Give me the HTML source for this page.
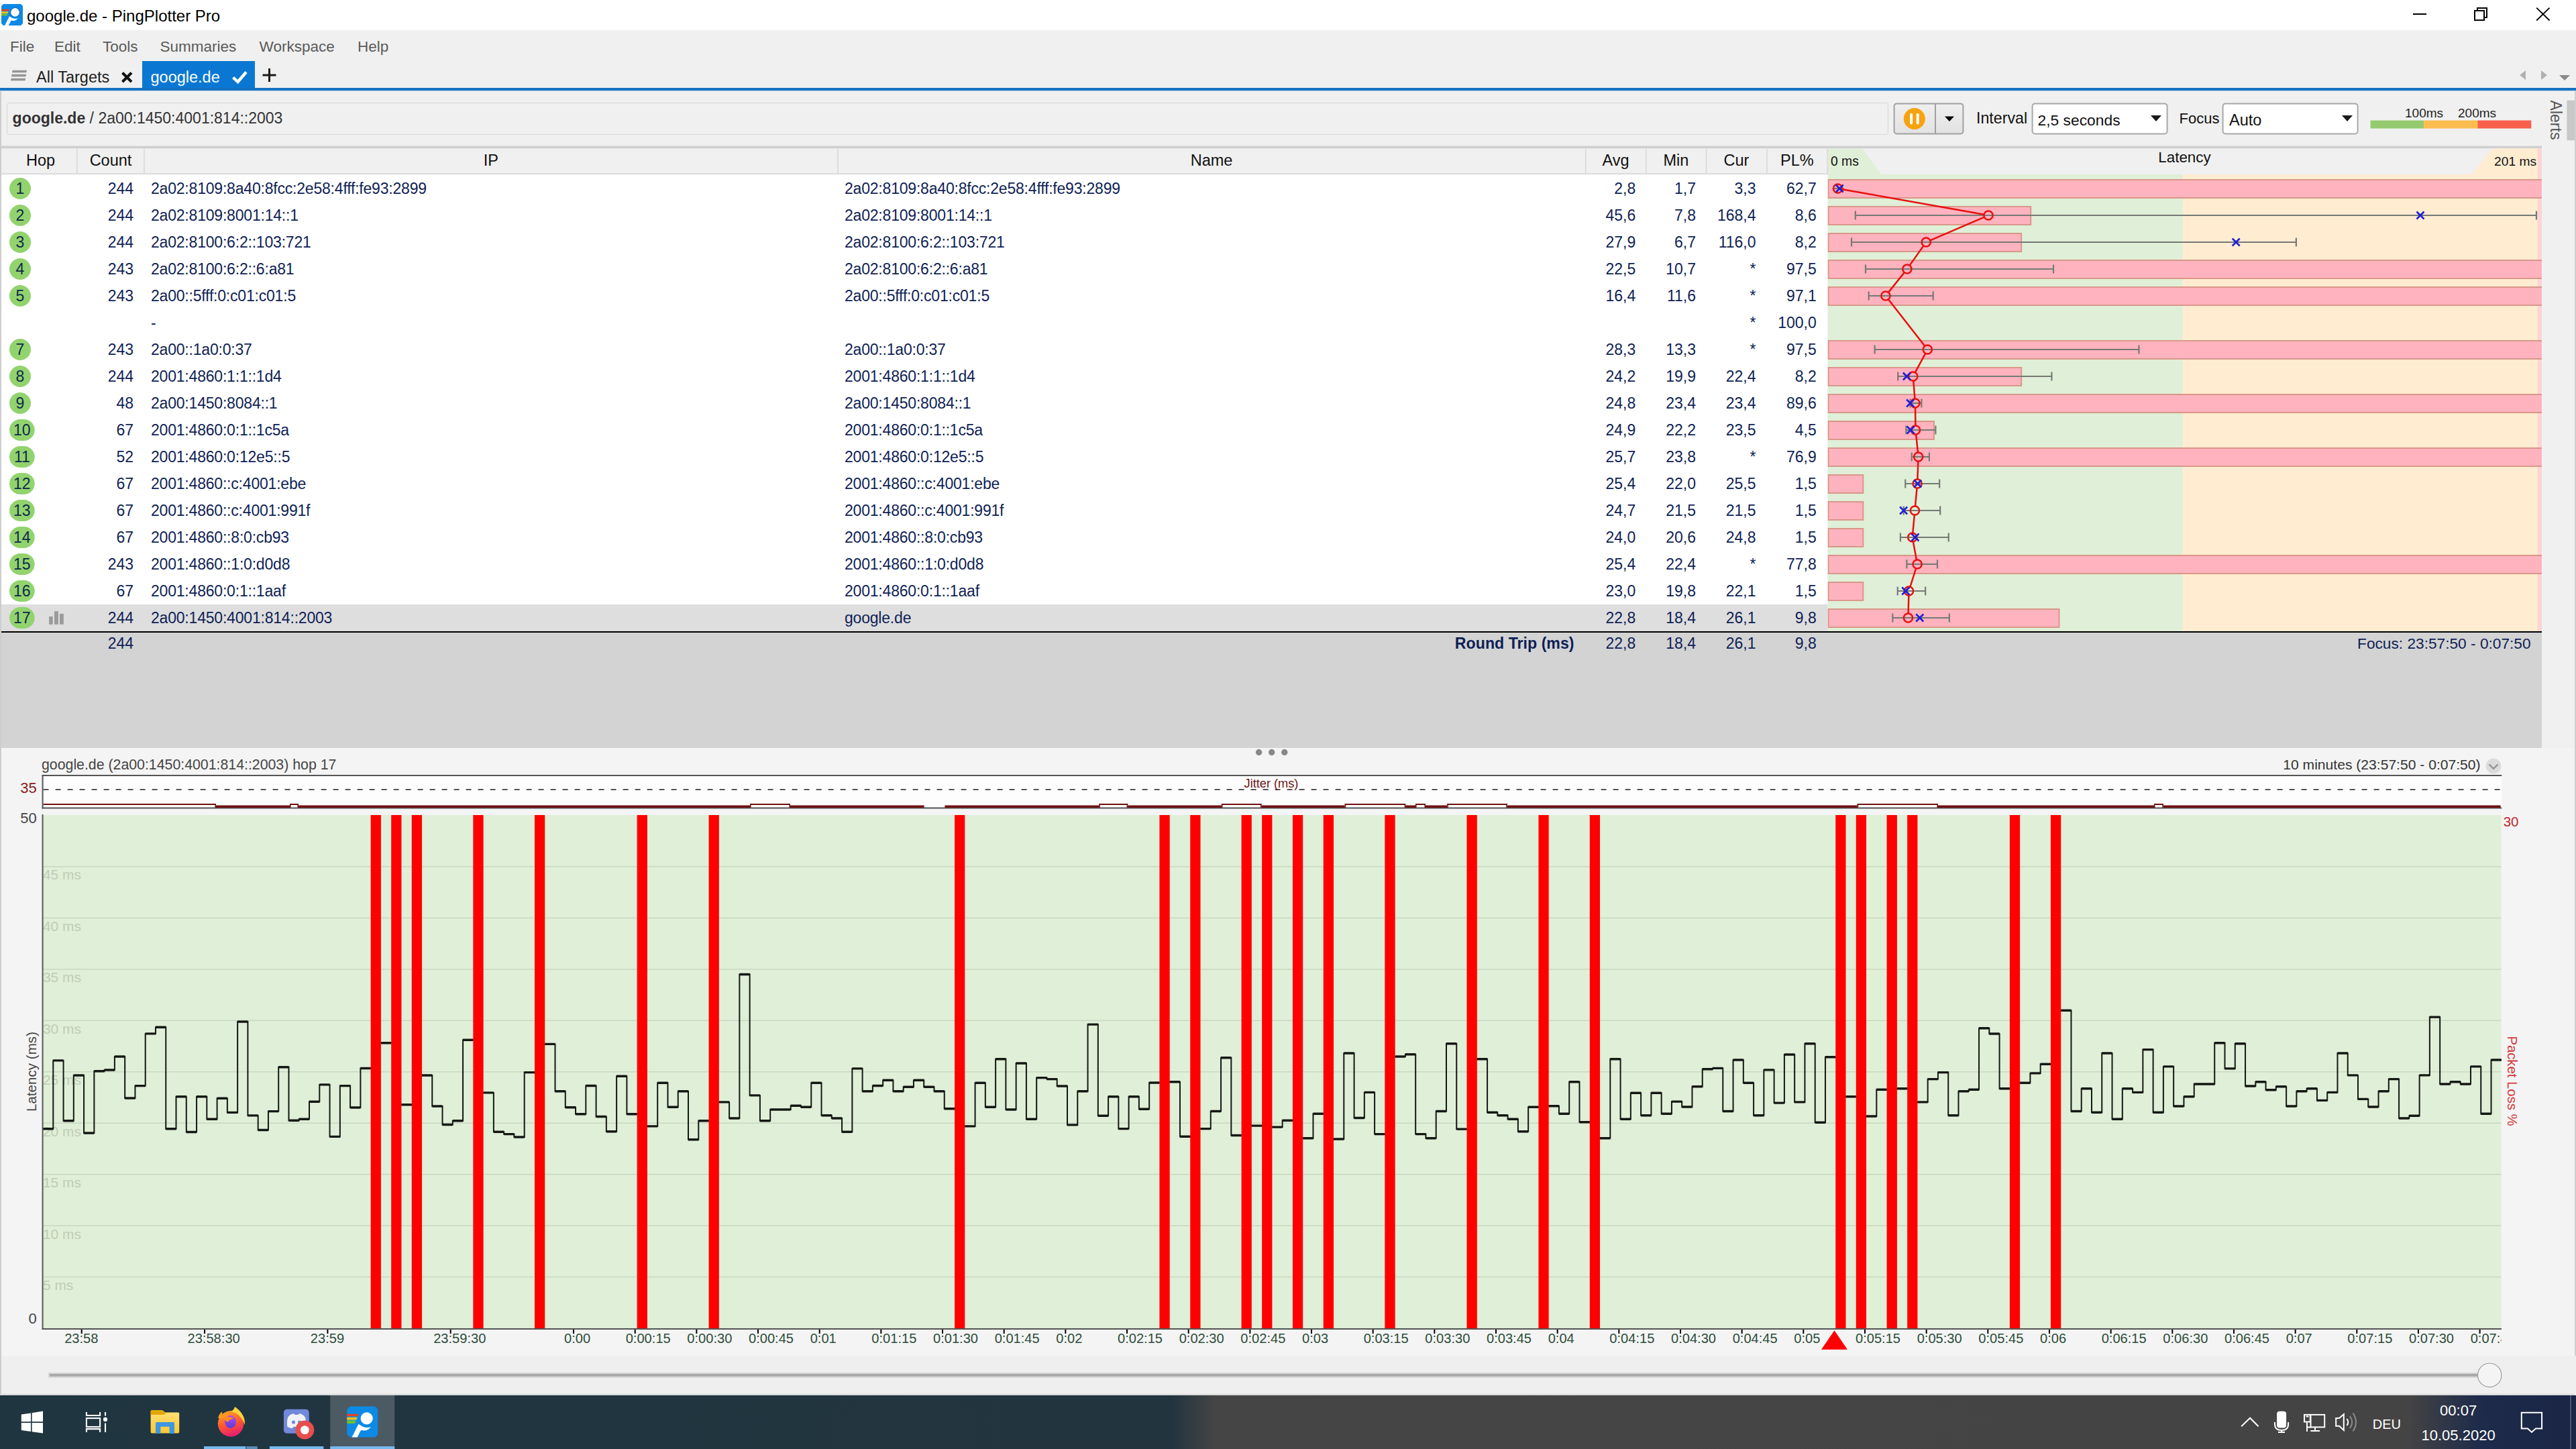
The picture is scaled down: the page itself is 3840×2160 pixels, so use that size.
<!DOCTYPE html><html><head><meta charset="utf-8"><title>google.de - PingPlotter Pro</title><style>html,body{margin:0;padding:0;width:3840px;height:2160px;overflow:hidden;background:#f0f0f0;}svg{display:block;font-family:"Liberation Sans",sans-serif;}</style></head><body><svg width="3840" height="2160" viewBox="0 0 3840 2160"><rect x="0.00" y="0.00" width="3840.00" height="45.00" fill="#ffffff" /><rect x="0.00" y="45.00" width="3840.00" height="86.00" fill="#f0f0f0" /><rect x="0.00" y="131.00" width="3840.00" height="4.50" fill="#1672c0" /><rect x="0.00" y="135.50" width="3840.00" height="1.20" fill="#cfe6f5" /><rect x="0.00" y="135.50" width="3840.00" height="1944.50" fill="#f0f0f0" /><rect x="0.00" y="136.00" width="2.00" height="1944.00" fill="#cdcdcd" /><g transform="translate(2,6)"><polygon points="3,0 29,0 32,3 32,29 29,32 3,32 0,29 0,3" fill="#0d8ae6"/><polygon points="0,7.7 11.9,7.7 11.3,10.2 0,10.2" fill="#e8411f"/><polygon points="0,11.2 10.6,11.2 9.9,13.9 0,13.9" fill="#f2c21c"/><polygon points="0,14.5 9.3,14.5 8.4,17.6 0,17.6" fill="#6cc12a"/><path d="M5.1 32 L10.7 32 L14.5 24.6 Q21.5 26 24.7 21.3 Q19 22.6 15.5 20.5 L12 18.2 Z" fill="#ffffff"/><circle cx="20.5" cy="12.4" r="7.7" fill="#1070c4"/><circle cx="20.5" cy="12.4" r="6.3" fill="#ffffff"/></g><text x="40.00" y="31.50" font-family="Liberation Sans" font-size="24" font-weight="400" fill="#000000" text-anchor="start" >google.de - PingPlotter Pro</text><rect x="3597.00" y="20.00" width="20.10" height="2.00" fill="#000000" /><rect x="3689" y="15.9" width="14" height="14.2" fill="none" stroke="#000" stroke-width="2"/><path d="M3693 14.9 V11.9 H3707 V26 H3704" fill="none" stroke="#000" stroke-width="2"/><path d="M3781.2 11.6 L3800.6 30.5 M3800.6 11.6 L3781.2 30.5" stroke="#000" stroke-width="1.8"/><text x="15.00" y="76.50" font-family="Liberation Sans" font-size="22.5" font-weight="400" fill="#5a5a5a" text-anchor="start" >File</text><text x="81.00" y="76.50" font-family="Liberation Sans" font-size="22.5" font-weight="400" fill="#5a5a5a" text-anchor="start" >Edit</text><text x="153.00" y="76.50" font-family="Liberation Sans" font-size="22.5" font-weight="400" fill="#5a5a5a" text-anchor="start" >Tools</text><text x="238.50" y="76.50" font-family="Liberation Sans" font-size="22.5" font-weight="400" fill="#5a5a5a" text-anchor="start" >Summaries</text><text x="386.60" y="76.50" font-family="Liberation Sans" font-size="22.5" font-weight="400" fill="#5a5a5a" text-anchor="start" >Workspace</text><text x="533.00" y="76.50" font-family="Liberation Sans" font-size="22.5" font-weight="400" fill="#5a5a5a" text-anchor="start" >Help</text><g fill="#959595"><polygon points="18.5,104.7 40,104.7 39.3,108.3 17.8,108.3"/><polygon points="17.6,110.7 39.1,110.7 38.4,114.3 16.9,114.3"/><polygon points="16.7,116.7 38.2,116.7 37.5,120.3 16,120.3"/></g><text x="54.00" y="123.00" font-family="Liberation Sans" font-size="23.5" font-weight="400" fill="#1e1e1e" text-anchor="start" >All Targets</text><path d="M182.5 108.5 L196 122 M196 108.5 L182.5 122" stroke="#111111" stroke-width="4"/><rect x="212.00" y="91.00" width="168.00" height="40.00" fill="#0a78d2" /><text x="224.50" y="123.00" font-family="Liberation Sans" font-size="23.5" font-weight="400" fill="#ffffff" text-anchor="start" >google.de</text><path d="M347.5 115.5 L354.5 122 L367 107.5" fill="none" stroke="#ffffff" stroke-width="4.4"/><path d="M401.5 102 V122 M391.5 112 H411.5" stroke="#1a1a1a" stroke-width="3"/><path d="M3765 105 L3756 112 L3765 119 Z" fill="#b0b0b0"/><path d="M3788 105 L3797 112 L3788 119 Z" fill="#b0b0b0"/><path d="M3815 112 L3831 112 L3823 120 Z" fill="#8a8a8a"/><rect x="10.5" y="153.5" width="2804" height="47" rx="3" fill="#f0f0f0" stroke="#d6d6d6" stroke-width="1"/><text x="18.6" y="183.5" font-family="Liberation Sans" font-size="23" fill="#333333"><tspan font-weight="700">google.de</tspan><tspan> / 2a00:1450:4001:814::2003</tspan></text><defs><linearGradient id="btng" x1="0" x2="0" y1="0" y2="1"><stop offset="0" stop-color="#efefef"/><stop offset="1" stop-color="#e2e2e2"/></linearGradient></defs><rect x="2823.6" y="154.4" width="102.8" height="45" rx="4" fill="url(#btng)" stroke="#a0a0a0" stroke-width="2"/><line x1="2885.00" y1="155.00" x2="2885.00" y2="199.50" stroke="#a0a0a0" stroke-width="2" /><circle cx="2853.8" cy="177" r="16" fill="#f7a20e"/><rect x="2847.1" y="168.8" width="4" height="16.7" rx="2" fill="#ffffff"/><rect x="2856.7" y="168.8" width="4" height="16.7" rx="2" fill="#ffffff"/><path d="M2899 173.4 L2913 173.4 L2906 181 Z" fill="#000000"/><text x="2946.00" y="184.00" font-family="Liberation Sans" font-size="23.2" font-weight="400" fill="#111111" text-anchor="start" >Interval</text><rect x="3029.6" y="154.4" width="201" height="45" rx="4" fill="#ffffff" stroke="#a8a8a8" stroke-width="2"/><text x="3037.60" y="187.00" font-family="Liberation Sans" font-size="22.8" font-weight="400" fill="#111111" text-anchor="start" >2,5 seconds</text><path d="M3206 172 L3222 172 L3214 181 Z" fill="#1a1a1a"/><text x="3248.50" y="184.00" font-family="Liberation Sans" font-size="22" font-weight="400" fill="#111111" text-anchor="start" >Focus</text><rect x="3313.6" y="154.4" width="201" height="45" rx="4" fill="#ffffff" stroke="#a8a8a8" stroke-width="2"/><text x="3323.00" y="187.00" font-family="Liberation Sans" font-size="23.5" font-weight="400" fill="#111111" text-anchor="start" >Auto</text><path d="M3491 172 L3507 172 L3499 181 Z" fill="#1a1a1a"/><rect x="3533.60" y="179.50" width="79.70" height="12.00" fill="#95cb6e" /><rect x="3613.30" y="179.50" width="80.00" height="12.00" fill="#fbbd4f" /><rect x="3693.30" y="179.50" width="80.00" height="12.00" fill="#f8604b" /><text x="3585.00" y="175.00" font-family="Liberation Sans" font-size="19" font-weight="400" fill="#1e1e1e" text-anchor="start" >100ms</text><text x="3664.00" y="175.00" font-family="Liberation Sans" font-size="19" font-weight="400" fill="#1e1e1e" text-anchor="start" >200ms</text><text x="3818.40" y="149.60" font-family="Liberation Sans" font-size="23" font-weight="400" fill="#555555" text-anchor="start" transform="rotate(90 3818.4 149.6)" dominant-baseline="hanging">Alerts</text><rect x="3826.40" y="149.60" width="11.60" height="59.60" fill="#c8c8c8" /><rect x="3838.00" y="136.00" width="2.00" height="1944.00" fill="#d0d0d0" /><rect x="3789.00" y="1115.00" width="49.00" height="963.00" fill="#f3f3f3" /><rect x="2.00" y="217.50" width="3787.00" height="4.00" fill="#d0d0d0" /><rect x="2.00" y="221.50" width="3787.00" height="38.00" fill="#f0f0f0" /><rect x="2.00" y="258.50" width="2722.00" height="1.50" fill="#d4d4d4" /><rect x="114.10" y="221.50" width="1.50" height="37.00" fill="#d8d8d8" /><rect x="214.20" y="221.50" width="1.50" height="37.00" fill="#d8d8d8" /><rect x="1248.30" y="221.50" width="1.50" height="37.00" fill="#d8d8d8" /><rect x="2362.90" y="221.50" width="1.50" height="37.00" fill="#d8d8d8" /><rect x="2453.10" y="221.50" width="1.50" height="37.00" fill="#d8d8d8" /><rect x="2542.70" y="221.50" width="1.50" height="37.00" fill="#d8d8d8" /><rect x="2633.20" y="221.50" width="1.50" height="37.00" fill="#d8d8d8" /><rect x="2723.50" y="221.50" width="1.50" height="38.50" fill="#d8d8d8" /><text x="60.50" y="247.00" font-family="Liberation Sans" font-size="23.5" font-weight="400" fill="#111111" text-anchor="middle" >Hop</text><text x="165.00" y="247.00" font-family="Liberation Sans" font-size="23.5" font-weight="400" fill="#111111" text-anchor="middle" >Count</text><text x="731.80" y="247.00" font-family="Liberation Sans" font-size="23.5" font-weight="400" fill="#111111" text-anchor="middle" >IP</text><text x="1806.00" y="247.00" font-family="Liberation Sans" font-size="23.5" font-weight="400" fill="#111111" text-anchor="middle" >Name</text><text x="2408.50" y="247.00" font-family="Liberation Sans" font-size="23.5" font-weight="400" fill="#111111" text-anchor="middle" >Avg</text><text x="2498.40" y="247.00" font-family="Liberation Sans" font-size="23.5" font-weight="400" fill="#111111" text-anchor="middle" >Min</text><text x="2588.50" y="247.00" font-family="Liberation Sans" font-size="23.5" font-weight="400" fill="#111111" text-anchor="middle" >Cur</text><text x="2678.80" y="247.00" font-family="Liberation Sans" font-size="23.5" font-weight="400" fill="#111111" text-anchor="middle" >PL%</text><polygon points="2725,221.5 2775.7,221.5 2804.8,260 2725,260" fill="#e0efd7"/><polygon points="3715.5,221.5 3782.6,221.5 3782.6,260 3684.5,260" fill="#ffecd1"/><rect x="3782.60" y="221.50" width="6.40" height="38.50" fill="#fcd5d5" /><text x="2729.00" y="247.00" font-family="Liberation Sans" font-size="19.3" font-weight="400" fill="#111111" text-anchor="start" >0 ms</text><text x="3256.50" y="242.30" font-family="Liberation Sans" font-size="22.4" font-weight="400" fill="#111111" text-anchor="middle" >Latency</text><text x="3781.00" y="246.80" font-family="Liberation Sans" font-size="19.2" font-weight="400" fill="#111111" text-anchor="end" >201 ms</text><rect x="2.00" y="260.00" width="2722.50" height="680.00" fill="#ffffff" /><rect x="2.00" y="901.00" width="2722.50" height="40.00" fill="#dedede" /><rect x="2724.50" y="260.00" width="529.10" height="681.00" fill="#e0efd7" /><rect x="3253.60" y="260.00" width="529.00" height="681.00" fill="#ffecd1" /><rect x="3782.60" y="260.00" width="6.40" height="681.00" fill="#fcd5d5" /><rect x="14.00" y="265.00" width="32.00" height="32" rx="16" fill="#92d36e"/><text x="30.00" y="289.30" font-family="Liberation Sans" font-size="23" font-weight="400" fill="#0d2a4a" text-anchor="middle" >1</text><text x="199.00" y="289.00" font-family="Liberation Sans" font-size="23" font-weight="400" fill="#0f1f55" text-anchor="end" >244</text><text x="225.00" y="289.00" font-family="Liberation Sans" font-size="23" font-weight="400" fill="#0f1f55" text-anchor="start" letter-spacing="-0.2" >2a02:8109:8a40:8fcc:2e58:4fff:fe93:2899</text><text x="1259.00" y="289.00" font-family="Liberation Sans" font-size="23" font-weight="400" fill="#0f1f55" text-anchor="start" letter-spacing="-0.2" >2a02:8109:8a40:8fcc:2e58:4fff:fe93:2899</text><text x="2438.20" y="289.00" font-family="Liberation Sans" font-size="23" font-weight="400" fill="#0f1f55" text-anchor="end" >2,8</text><text x="2528.00" y="289.00" font-family="Liberation Sans" font-size="23" font-weight="400" fill="#0f1f55" text-anchor="end" >1,7</text><text x="2617.50" y="289.00" font-family="Liberation Sans" font-size="23" font-weight="400" fill="#0f1f55" text-anchor="end" >3,3</text><text x="2707.70" y="289.00" font-family="Liberation Sans" font-size="23" font-weight="400" fill="#0f1f55" text-anchor="end" >62,7</text><rect x="14.00" y="305.00" width="32.00" height="32" rx="16" fill="#92d36e"/><text x="30.00" y="329.30" font-family="Liberation Sans" font-size="23" font-weight="400" fill="#0d2a4a" text-anchor="middle" >2</text><text x="199.00" y="329.00" font-family="Liberation Sans" font-size="23" font-weight="400" fill="#0f1f55" text-anchor="end" >244</text><text x="225.00" y="329.00" font-family="Liberation Sans" font-size="23" font-weight="400" fill="#0f1f55" text-anchor="start" letter-spacing="-0.2" >2a02:8109:8001:14::1</text><text x="1259.00" y="329.00" font-family="Liberation Sans" font-size="23" font-weight="400" fill="#0f1f55" text-anchor="start" letter-spacing="-0.2" >2a02:8109:8001:14::1</text><text x="2438.20" y="329.00" font-family="Liberation Sans" font-size="23" font-weight="400" fill="#0f1f55" text-anchor="end" >45,6</text><text x="2528.00" y="329.00" font-family="Liberation Sans" font-size="23" font-weight="400" fill="#0f1f55" text-anchor="end" >7,8</text><text x="2617.50" y="329.00" font-family="Liberation Sans" font-size="23" font-weight="400" fill="#0f1f55" text-anchor="end" >168,4</text><text x="2707.70" y="329.00" font-family="Liberation Sans" font-size="23" font-weight="400" fill="#0f1f55" text-anchor="end" >8,6</text><rect x="14.00" y="345.00" width="32.00" height="32" rx="16" fill="#92d36e"/><text x="30.00" y="369.30" font-family="Liberation Sans" font-size="23" font-weight="400" fill="#0d2a4a" text-anchor="middle" >3</text><text x="199.00" y="369.00" font-family="Liberation Sans" font-size="23" font-weight="400" fill="#0f1f55" text-anchor="end" >244</text><text x="225.00" y="369.00" font-family="Liberation Sans" font-size="23" font-weight="400" fill="#0f1f55" text-anchor="start" letter-spacing="-0.2" >2a02:8100:6:2::103:721</text><text x="1259.00" y="369.00" font-family="Liberation Sans" font-size="23" font-weight="400" fill="#0f1f55" text-anchor="start" letter-spacing="-0.2" >2a02:8100:6:2::103:721</text><text x="2438.20" y="369.00" font-family="Liberation Sans" font-size="23" font-weight="400" fill="#0f1f55" text-anchor="end" >27,9</text><text x="2528.00" y="369.00" font-family="Liberation Sans" font-size="23" font-weight="400" fill="#0f1f55" text-anchor="end" >6,7</text><text x="2617.50" y="369.00" font-family="Liberation Sans" font-size="23" font-weight="400" fill="#0f1f55" text-anchor="end" >116,0</text><text x="2707.70" y="369.00" font-family="Liberation Sans" font-size="23" font-weight="400" fill="#0f1f55" text-anchor="end" >8,2</text><rect x="14.00" y="385.00" width="32.00" height="32" rx="16" fill="#92d36e"/><text x="30.00" y="409.30" font-family="Liberation Sans" font-size="23" font-weight="400" fill="#0d2a4a" text-anchor="middle" >4</text><text x="199.00" y="409.00" font-family="Liberation Sans" font-size="23" font-weight="400" fill="#0f1f55" text-anchor="end" >243</text><text x="225.00" y="409.00" font-family="Liberation Sans" font-size="23" font-weight="400" fill="#0f1f55" text-anchor="start" letter-spacing="-0.2" >2a02:8100:6:2::6:a81</text><text x="1259.00" y="409.00" font-family="Liberation Sans" font-size="23" font-weight="400" fill="#0f1f55" text-anchor="start" letter-spacing="-0.2" >2a02:8100:6:2::6:a81</text><text x="2438.20" y="409.00" font-family="Liberation Sans" font-size="23" font-weight="400" fill="#0f1f55" text-anchor="end" >22,5</text><text x="2528.00" y="409.00" font-family="Liberation Sans" font-size="23" font-weight="400" fill="#0f1f55" text-anchor="end" >10,7</text><text x="2617.50" y="409.00" font-family="Liberation Sans" font-size="23" font-weight="400" fill="#0f1f55" text-anchor="end" >*</text><text x="2707.70" y="409.00" font-family="Liberation Sans" font-size="23" font-weight="400" fill="#0f1f55" text-anchor="end" >97,5</text><rect x="14.00" y="425.00" width="32.00" height="32" rx="16" fill="#92d36e"/><text x="30.00" y="449.30" font-family="Liberation Sans" font-size="23" font-weight="400" fill="#0d2a4a" text-anchor="middle" >5</text><text x="199.00" y="449.00" font-family="Liberation Sans" font-size="23" font-weight="400" fill="#0f1f55" text-anchor="end" >243</text><text x="225.00" y="449.00" font-family="Liberation Sans" font-size="23" font-weight="400" fill="#0f1f55" text-anchor="start" letter-spacing="-0.2" >2a00::5fff:0:c01:c01:5</text><text x="1259.00" y="449.00" font-family="Liberation Sans" font-size="23" font-weight="400" fill="#0f1f55" text-anchor="start" letter-spacing="-0.2" >2a00::5fff:0:c01:c01:5</text><text x="2438.20" y="449.00" font-family="Liberation Sans" font-size="23" font-weight="400" fill="#0f1f55" text-anchor="end" >16,4</text><text x="2528.00" y="449.00" font-family="Liberation Sans" font-size="23" font-weight="400" fill="#0f1f55" text-anchor="end" >11,6</text><text x="2617.50" y="449.00" font-family="Liberation Sans" font-size="23" font-weight="400" fill="#0f1f55" text-anchor="end" >*</text><text x="2707.70" y="449.00" font-family="Liberation Sans" font-size="23" font-weight="400" fill="#0f1f55" text-anchor="end" >97,1</text><text x="225.00" y="489.00" font-family="Liberation Sans" font-size="23" font-weight="400" fill="#0f1f55" text-anchor="start" >-</text><text x="2617.50" y="489.00" font-family="Liberation Sans" font-size="23" font-weight="400" fill="#0f1f55" text-anchor="end" >*</text><text x="2707.70" y="489.00" font-family="Liberation Sans" font-size="23" font-weight="400" fill="#0f1f55" text-anchor="end" >100,0</text><rect x="14.00" y="505.00" width="32.00" height="32" rx="16" fill="#92d36e"/><text x="30.00" y="529.30" font-family="Liberation Sans" font-size="23" font-weight="400" fill="#0d2a4a" text-anchor="middle" >7</text><text x="199.00" y="529.00" font-family="Liberation Sans" font-size="23" font-weight="400" fill="#0f1f55" text-anchor="end" >243</text><text x="225.00" y="529.00" font-family="Liberation Sans" font-size="23" font-weight="400" fill="#0f1f55" text-anchor="start" letter-spacing="-0.2" >2a00::1a0:0:37</text><text x="1259.00" y="529.00" font-family="Liberation Sans" font-size="23" font-weight="400" fill="#0f1f55" text-anchor="start" letter-spacing="-0.2" >2a00::1a0:0:37</text><text x="2438.20" y="529.00" font-family="Liberation Sans" font-size="23" font-weight="400" fill="#0f1f55" text-anchor="end" >28,3</text><text x="2528.00" y="529.00" font-family="Liberation Sans" font-size="23" font-weight="400" fill="#0f1f55" text-anchor="end" >13,3</text><text x="2617.50" y="529.00" font-family="Liberation Sans" font-size="23" font-weight="400" fill="#0f1f55" text-anchor="end" >*</text><text x="2707.70" y="529.00" font-family="Liberation Sans" font-size="23" font-weight="400" fill="#0f1f55" text-anchor="end" >97,5</text><rect x="14.00" y="545.00" width="32.00" height="32" rx="16" fill="#92d36e"/><text x="30.00" y="569.30" font-family="Liberation Sans" font-size="23" font-weight="400" fill="#0d2a4a" text-anchor="middle" >8</text><text x="199.00" y="569.00" font-family="Liberation Sans" font-size="23" font-weight="400" fill="#0f1f55" text-anchor="end" >244</text><text x="225.00" y="569.00" font-family="Liberation Sans" font-size="23" font-weight="400" fill="#0f1f55" text-anchor="start" letter-spacing="-0.2" >2001:4860:1:1::1d4</text><text x="1259.00" y="569.00" font-family="Liberation Sans" font-size="23" font-weight="400" fill="#0f1f55" text-anchor="start" letter-spacing="-0.2" >2001:4860:1:1::1d4</text><text x="2438.20" y="569.00" font-family="Liberation Sans" font-size="23" font-weight="400" fill="#0f1f55" text-anchor="end" >24,2</text><text x="2528.00" y="569.00" font-family="Liberation Sans" font-size="23" font-weight="400" fill="#0f1f55" text-anchor="end" >19,9</text><text x="2617.50" y="569.00" font-family="Liberation Sans" font-size="23" font-weight="400" fill="#0f1f55" text-anchor="end" >22,4</text><text x="2707.70" y="569.00" font-family="Liberation Sans" font-size="23" font-weight="400" fill="#0f1f55" text-anchor="end" >8,2</text><rect x="14.00" y="585.00" width="32.00" height="32" rx="16" fill="#92d36e"/><text x="30.00" y="609.30" font-family="Liberation Sans" font-size="23" font-weight="400" fill="#0d2a4a" text-anchor="middle" >9</text><text x="199.00" y="609.00" font-family="Liberation Sans" font-size="23" font-weight="400" fill="#0f1f55" text-anchor="end" >48</text><text x="225.00" y="609.00" font-family="Liberation Sans" font-size="23" font-weight="400" fill="#0f1f55" text-anchor="start" letter-spacing="-0.2" >2a00:1450:8084::1</text><text x="1259.00" y="609.00" font-family="Liberation Sans" font-size="23" font-weight="400" fill="#0f1f55" text-anchor="start" letter-spacing="-0.2" >2a00:1450:8084::1</text><text x="2438.20" y="609.00" font-family="Liberation Sans" font-size="23" font-weight="400" fill="#0f1f55" text-anchor="end" >24,8</text><text x="2528.00" y="609.00" font-family="Liberation Sans" font-size="23" font-weight="400" fill="#0f1f55" text-anchor="end" >23,4</text><text x="2617.50" y="609.00" font-family="Liberation Sans" font-size="23" font-weight="400" fill="#0f1f55" text-anchor="end" >23,4</text><text x="2707.70" y="609.00" font-family="Liberation Sans" font-size="23" font-weight="400" fill="#0f1f55" text-anchor="end" >89,6</text><rect x="14.00" y="625.00" width="37.70" height="32" rx="16" fill="#92d36e"/><text x="32.85" y="649.30" font-family="Liberation Sans" font-size="23" font-weight="400" fill="#0d2a4a" text-anchor="middle" >10</text><text x="199.00" y="649.00" font-family="Liberation Sans" font-size="23" font-weight="400" fill="#0f1f55" text-anchor="end" >67</text><text x="225.00" y="649.00" font-family="Liberation Sans" font-size="23" font-weight="400" fill="#0f1f55" text-anchor="start" letter-spacing="-0.2" >2001:4860:0:1::1c5a</text><text x="1259.00" y="649.00" font-family="Liberation Sans" font-size="23" font-weight="400" fill="#0f1f55" text-anchor="start" letter-spacing="-0.2" >2001:4860:0:1::1c5a</text><text x="2438.20" y="649.00" font-family="Liberation Sans" font-size="23" font-weight="400" fill="#0f1f55" text-anchor="end" >24,9</text><text x="2528.00" y="649.00" font-family="Liberation Sans" font-size="23" font-weight="400" fill="#0f1f55" text-anchor="end" >22,2</text><text x="2617.50" y="649.00" font-family="Liberation Sans" font-size="23" font-weight="400" fill="#0f1f55" text-anchor="end" >23,5</text><text x="2707.70" y="649.00" font-family="Liberation Sans" font-size="23" font-weight="400" fill="#0f1f55" text-anchor="end" >4,5</text><rect x="14.00" y="665.00" width="37.70" height="32" rx="16" fill="#92d36e"/><text x="32.85" y="689.30" font-family="Liberation Sans" font-size="23" font-weight="400" fill="#0d2a4a" text-anchor="middle" >11</text><text x="199.00" y="689.00" font-family="Liberation Sans" font-size="23" font-weight="400" fill="#0f1f55" text-anchor="end" >52</text><text x="225.00" y="689.00" font-family="Liberation Sans" font-size="23" font-weight="400" fill="#0f1f55" text-anchor="start" letter-spacing="-0.2" >2001:4860:0:12e5::5</text><text x="1259.00" y="689.00" font-family="Liberation Sans" font-size="23" font-weight="400" fill="#0f1f55" text-anchor="start" letter-spacing="-0.2" >2001:4860:0:12e5::5</text><text x="2438.20" y="689.00" font-family="Liberation Sans" font-size="23" font-weight="400" fill="#0f1f55" text-anchor="end" >25,7</text><text x="2528.00" y="689.00" font-family="Liberation Sans" font-size="23" font-weight="400" fill="#0f1f55" text-anchor="end" >23,8</text><text x="2617.50" y="689.00" font-family="Liberation Sans" font-size="23" font-weight="400" fill="#0f1f55" text-anchor="end" >*</text><text x="2707.70" y="689.00" font-family="Liberation Sans" font-size="23" font-weight="400" fill="#0f1f55" text-anchor="end" >76,9</text><rect x="14.00" y="705.00" width="37.70" height="32" rx="16" fill="#92d36e"/><text x="32.85" y="729.30" font-family="Liberation Sans" font-size="23" font-weight="400" fill="#0d2a4a" text-anchor="middle" >12</text><text x="199.00" y="729.00" font-family="Liberation Sans" font-size="23" font-weight="400" fill="#0f1f55" text-anchor="end" >67</text><text x="225.00" y="729.00" font-family="Liberation Sans" font-size="23" font-weight="400" fill="#0f1f55" text-anchor="start" letter-spacing="-0.2" >2001:4860::c:4001:ebe</text><text x="1259.00" y="729.00" font-family="Liberation Sans" font-size="23" font-weight="400" fill="#0f1f55" text-anchor="start" letter-spacing="-0.2" >2001:4860::c:4001:ebe</text><text x="2438.20" y="729.00" font-family="Liberation Sans" font-size="23" font-weight="400" fill="#0f1f55" text-anchor="end" >25,4</text><text x="2528.00" y="729.00" font-family="Liberation Sans" font-size="23" font-weight="400" fill="#0f1f55" text-anchor="end" >22,0</text><text x="2617.50" y="729.00" font-family="Liberation Sans" font-size="23" font-weight="400" fill="#0f1f55" text-anchor="end" >25,5</text><text x="2707.70" y="729.00" font-family="Liberation Sans" font-size="23" font-weight="400" fill="#0f1f55" text-anchor="end" >1,5</text><rect x="14.00" y="745.00" width="37.70" height="32" rx="16" fill="#92d36e"/><text x="32.85" y="769.30" font-family="Liberation Sans" font-size="23" font-weight="400" fill="#0d2a4a" text-anchor="middle" >13</text><text x="199.00" y="769.00" font-family="Liberation Sans" font-size="23" font-weight="400" fill="#0f1f55" text-anchor="end" >67</text><text x="225.00" y="769.00" font-family="Liberation Sans" font-size="23" font-weight="400" fill="#0f1f55" text-anchor="start" letter-spacing="-0.2" >2001:4860::c:4001:991f</text><text x="1259.00" y="769.00" font-family="Liberation Sans" font-size="23" font-weight="400" fill="#0f1f55" text-anchor="start" letter-spacing="-0.2" >2001:4860::c:4001:991f</text><text x="2438.20" y="769.00" font-family="Liberation Sans" font-size="23" font-weight="400" fill="#0f1f55" text-anchor="end" >24,7</text><text x="2528.00" y="769.00" font-family="Liberation Sans" font-size="23" font-weight="400" fill="#0f1f55" text-anchor="end" >21,5</text><text x="2617.50" y="769.00" font-family="Liberation Sans" font-size="23" font-weight="400" fill="#0f1f55" text-anchor="end" >21,5</text><text x="2707.70" y="769.00" font-family="Liberation Sans" font-size="23" font-weight="400" fill="#0f1f55" text-anchor="end" >1,5</text><rect x="14.00" y="785.00" width="37.70" height="32" rx="16" fill="#92d36e"/><text x="32.85" y="809.30" font-family="Liberation Sans" font-size="23" font-weight="400" fill="#0d2a4a" text-anchor="middle" >14</text><text x="199.00" y="809.00" font-family="Liberation Sans" font-size="23" font-weight="400" fill="#0f1f55" text-anchor="end" >67</text><text x="225.00" y="809.00" font-family="Liberation Sans" font-size="23" font-weight="400" fill="#0f1f55" text-anchor="start" letter-spacing="-0.2" >2001:4860::8:0:cb93</text><text x="1259.00" y="809.00" font-family="Liberation Sans" font-size="23" font-weight="400" fill="#0f1f55" text-anchor="start" letter-spacing="-0.2" >2001:4860::8:0:cb93</text><text x="2438.20" y="809.00" font-family="Liberation Sans" font-size="23" font-weight="400" fill="#0f1f55" text-anchor="end" >24,0</text><text x="2528.00" y="809.00" font-family="Liberation Sans" font-size="23" font-weight="400" fill="#0f1f55" text-anchor="end" >20,6</text><text x="2617.50" y="809.00" font-family="Liberation Sans" font-size="23" font-weight="400" fill="#0f1f55" text-anchor="end" >24,8</text><text x="2707.70" y="809.00" font-family="Liberation Sans" font-size="23" font-weight="400" fill="#0f1f55" text-anchor="end" >1,5</text><rect x="14.00" y="825.00" width="37.70" height="32" rx="16" fill="#92d36e"/><text x="32.85" y="849.30" font-family="Liberation Sans" font-size="23" font-weight="400" fill="#0d2a4a" text-anchor="middle" >15</text><text x="199.00" y="849.00" font-family="Liberation Sans" font-size="23" font-weight="400" fill="#0f1f55" text-anchor="end" >243</text><text x="225.00" y="849.00" font-family="Liberation Sans" font-size="23" font-weight="400" fill="#0f1f55" text-anchor="start" letter-spacing="-0.2" >2001:4860::1:0:d0d8</text><text x="1259.00" y="849.00" font-family="Liberation Sans" font-size="23" font-weight="400" fill="#0f1f55" text-anchor="start" letter-spacing="-0.2" >2001:4860::1:0:d0d8</text><text x="2438.20" y="849.00" font-family="Liberation Sans" font-size="23" font-weight="400" fill="#0f1f55" text-anchor="end" >25,4</text><text x="2528.00" y="849.00" font-family="Liberation Sans" font-size="23" font-weight="400" fill="#0f1f55" text-anchor="end" >22,4</text><text x="2617.50" y="849.00" font-family="Liberation Sans" font-size="23" font-weight="400" fill="#0f1f55" text-anchor="end" >*</text><text x="2707.70" y="849.00" font-family="Liberation Sans" font-size="23" font-weight="400" fill="#0f1f55" text-anchor="end" >77,8</text><rect x="14.00" y="865.00" width="37.70" height="32" rx="16" fill="#92d36e"/><text x="32.85" y="889.30" font-family="Liberation Sans" font-size="23" font-weight="400" fill="#0d2a4a" text-anchor="middle" >16</text><text x="199.00" y="889.00" font-family="Liberation Sans" font-size="23" font-weight="400" fill="#0f1f55" text-anchor="end" >67</text><text x="225.00" y="889.00" font-family="Liberation Sans" font-size="23" font-weight="400" fill="#0f1f55" text-anchor="start" letter-spacing="-0.2" >2001:4860:0:1::1aaf</text><text x="1259.00" y="889.00" font-family="Liberation Sans" font-size="23" font-weight="400" fill="#0f1f55" text-anchor="start" letter-spacing="-0.2" >2001:4860:0:1::1aaf</text><text x="2438.20" y="889.00" font-family="Liberation Sans" font-size="23" font-weight="400" fill="#0f1f55" text-anchor="end" >23,0</text><text x="2528.00" y="889.00" font-family="Liberation Sans" font-size="23" font-weight="400" fill="#0f1f55" text-anchor="end" >19,8</text><text x="2617.50" y="889.00" font-family="Liberation Sans" font-size="23" font-weight="400" fill="#0f1f55" text-anchor="end" >22,1</text><text x="2707.70" y="889.00" font-family="Liberation Sans" font-size="23" font-weight="400" fill="#0f1f55" text-anchor="end" >1,5</text><rect x="14.00" y="905.00" width="37.70" height="32" rx="16" fill="#92d36e"/><text x="32.85" y="929.30" font-family="Liberation Sans" font-size="23" font-weight="400" fill="#0d2a4a" text-anchor="middle" >17</text><text x="199.00" y="929.00" font-family="Liberation Sans" font-size="23" font-weight="400" fill="#0f1f55" text-anchor="end" >244</text><text x="225.00" y="929.00" font-family="Liberation Sans" font-size="23" font-weight="400" fill="#0f1f55" text-anchor="start" letter-spacing="-0.2" >2a00:1450:4001:814::2003</text><text x="1259.00" y="929.00" font-family="Liberation Sans" font-size="23" font-weight="400" fill="#0f1f55" text-anchor="start" letter-spacing="-0.2" >google.de</text><text x="2438.20" y="929.00" font-family="Liberation Sans" font-size="23" font-weight="400" fill="#0f1f55" text-anchor="end" >22,8</text><text x="2528.00" y="929.00" font-family="Liberation Sans" font-size="23" font-weight="400" fill="#0f1f55" text-anchor="end" >18,4</text><text x="2617.50" y="929.00" font-family="Liberation Sans" font-size="23" font-weight="400" fill="#0f1f55" text-anchor="end" >26,1</text><text x="2707.70" y="929.00" font-family="Liberation Sans" font-size="23" font-weight="400" fill="#0f1f55" text-anchor="end" >9,8</text><rect x="73.10" y="918.90" width="5.60" height="12.00" fill="#9b9b9b" /><rect x="81.00" y="911.20" width="5.90" height="19.60" fill="#9b9b9b" /><rect x="89.00" y="914.90" width="5.80" height="15.90" fill="#9b9b9b" /><defs><clipPath id="gclip"><rect x="2724.5" y="260" width="1064.5" height="681"/></clipPath></defs><rect x="2725.50" y="268.00" width="1073.50" height="27" fill="#ffb3bf" stroke="#d9978a" stroke-width="2" clip-path="url(#gclip)"/><rect x="2725.50" y="308.00" width="301.72" height="27" fill="#ffb3bf" stroke="#d9978a" stroke-width="2" clip-path="url(#gclip)"/><rect x="2725.50" y="348.00" width="287.64" height="27" fill="#ffb3bf" stroke="#d9978a" stroke-width="2" clip-path="url(#gclip)"/><rect x="2725.50" y="388.00" width="1073.50" height="27" fill="#ffb3bf" stroke="#d9978a" stroke-width="2" clip-path="url(#gclip)"/><rect x="2725.50" y="428.00" width="1073.50" height="27" fill="#ffb3bf" stroke="#d9978a" stroke-width="2" clip-path="url(#gclip)"/><rect x="2725.50" y="508.00" width="1073.50" height="27" fill="#ffb3bf" stroke="#d9978a" stroke-width="2" clip-path="url(#gclip)"/><rect x="2725.50" y="548.00" width="287.64" height="27" fill="#ffb3bf" stroke="#d9978a" stroke-width="2" clip-path="url(#gclip)"/><rect x="2725.50" y="588.00" width="1073.50" height="27" fill="#ffb3bf" stroke="#d9978a" stroke-width="2" clip-path="url(#gclip)"/><rect x="2725.50" y="628.00" width="157.40" height="27" fill="#ffb3bf" stroke="#d9978a" stroke-width="2" clip-path="url(#gclip)"/><rect x="2725.50" y="668.00" width="1073.50" height="27" fill="#ffb3bf" stroke="#d9978a" stroke-width="2" clip-path="url(#gclip)"/><rect x="2725.50" y="708.00" width="51.80" height="27" fill="#ffb3bf" stroke="#d9978a" stroke-width="2" clip-path="url(#gclip)"/><rect x="2725.50" y="748.00" width="51.80" height="27" fill="#ffb3bf" stroke="#d9978a" stroke-width="2" clip-path="url(#gclip)"/><rect x="2725.50" y="788.00" width="51.80" height="27" fill="#ffb3bf" stroke="#d9978a" stroke-width="2" clip-path="url(#gclip)"/><rect x="2725.50" y="828.00" width="1073.50" height="27" fill="#ffb3bf" stroke="#d9978a" stroke-width="2" clip-path="url(#gclip)"/><rect x="2725.50" y="868.00" width="51.80" height="27" fill="#ffb3bf" stroke="#d9978a" stroke-width="2" clip-path="url(#gclip)"/><rect x="2725.50" y="908.00" width="343.96" height="27" fill="#ffb3bf" stroke="#d9978a" stroke-width="2" clip-path="url(#gclip)"/><line x1="2733.81" y1="281.00" x2="2748.50" y2="281.00" stroke="#757a75" stroke-width="2.2" /><line x1="2765.80" y1="321.00" x2="3781.00" y2="321.00" stroke="#757a75" stroke-width="2.2" /><line x1="2765.80" y1="314.50" x2="2765.80" y2="327.50" stroke="#757a75" stroke-width="2.2" /><line x1="3781.00" y1="314.50" x2="3781.00" y2="327.50" stroke="#757a75" stroke-width="2.2" /><line x1="2760.03" y1="361.00" x2="3422.88" y2="361.00" stroke="#757a75" stroke-width="2.2" /><line x1="2760.03" y1="354.50" x2="2760.03" y2="367.50" stroke="#757a75" stroke-width="2.2" /><line x1="3422.88" y1="354.50" x2="3422.88" y2="367.50" stroke="#757a75" stroke-width="2.2" /><line x1="2781.01" y1="401.00" x2="3061.04" y2="401.00" stroke="#757a75" stroke-width="2.2" /><line x1="2781.01" y1="394.50" x2="2781.01" y2="407.50" stroke="#757a75" stroke-width="2.2" /><line x1="3061.04" y1="394.50" x2="3061.04" y2="407.50" stroke="#757a75" stroke-width="2.2" /><line x1="2785.73" y1="441.00" x2="2881.70" y2="441.00" stroke="#757a75" stroke-width="2.2" /><line x1="2785.73" y1="434.50" x2="2785.73" y2="447.50" stroke="#757a75" stroke-width="2.2" /><line x1="2881.70" y1="434.50" x2="2881.70" y2="447.50" stroke="#757a75" stroke-width="2.2" /><line x1="2794.65" y1="521.00" x2="3188.47" y2="521.00" stroke="#757a75" stroke-width="2.2" /><line x1="2794.65" y1="514.50" x2="2794.65" y2="527.50" stroke="#757a75" stroke-width="2.2" /><line x1="3188.47" y1="514.50" x2="3188.47" y2="527.50" stroke="#757a75" stroke-width="2.2" /><line x1="2829.26" y1="561.00" x2="3058.42" y2="561.00" stroke="#757a75" stroke-width="2.2" /><line x1="2829.26" y1="554.50" x2="2829.26" y2="567.50" stroke="#757a75" stroke-width="2.2" /><line x1="3058.42" y1="554.50" x2="3058.42" y2="567.50" stroke="#757a75" stroke-width="2.2" /><line x1="2847.61" y1="601.00" x2="2864.39" y2="601.00" stroke="#757a75" stroke-width="2.2" /><line x1="2847.61" y1="594.50" x2="2847.61" y2="607.50" stroke="#757a75" stroke-width="2.2" /><line x1="2864.39" y1="594.50" x2="2864.39" y2="607.50" stroke="#757a75" stroke-width="2.2" /><line x1="2841.32" y1="641.00" x2="2885.37" y2="641.00" stroke="#757a75" stroke-width="2.2" /><line x1="2841.32" y1="634.50" x2="2841.32" y2="647.50" stroke="#757a75" stroke-width="2.2" /><line x1="2885.37" y1="634.50" x2="2885.37" y2="647.50" stroke="#757a75" stroke-width="2.2" /><line x1="2849.71" y1="681.00" x2="2875.93" y2="681.00" stroke="#757a75" stroke-width="2.2" /><line x1="2849.71" y1="674.50" x2="2849.71" y2="687.50" stroke="#757a75" stroke-width="2.2" /><line x1="2875.93" y1="674.50" x2="2875.93" y2="687.50" stroke="#757a75" stroke-width="2.2" /><line x1="2840.27" y1="721.00" x2="2891.13" y2="721.00" stroke="#757a75" stroke-width="2.2" /><line x1="2840.27" y1="714.50" x2="2840.27" y2="727.50" stroke="#757a75" stroke-width="2.2" /><line x1="2891.13" y1="714.50" x2="2891.13" y2="727.50" stroke="#757a75" stroke-width="2.2" /><line x1="2837.65" y1="761.00" x2="2892.18" y2="761.00" stroke="#757a75" stroke-width="2.2" /><line x1="2837.65" y1="754.50" x2="2837.65" y2="767.50" stroke="#757a75" stroke-width="2.2" /><line x1="2892.18" y1="754.50" x2="2892.18" y2="767.50" stroke="#757a75" stroke-width="2.2" /><line x1="2832.93" y1="801.00" x2="2904.77" y2="801.00" stroke="#757a75" stroke-width="2.2" /><line x1="2832.93" y1="794.50" x2="2832.93" y2="807.50" stroke="#757a75" stroke-width="2.2" /><line x1="2904.77" y1="794.50" x2="2904.77" y2="807.50" stroke="#757a75" stroke-width="2.2" /><line x1="2842.37" y1="841.00" x2="2887.99" y2="841.00" stroke="#757a75" stroke-width="2.2" /><line x1="2842.37" y1="834.50" x2="2842.37" y2="847.50" stroke="#757a75" stroke-width="2.2" /><line x1="2887.99" y1="834.50" x2="2887.99" y2="847.50" stroke="#757a75" stroke-width="2.2" /><line x1="2828.73" y1="881.00" x2="2870.16" y2="881.00" stroke="#757a75" stroke-width="2.2" /><line x1="2828.73" y1="874.50" x2="2828.73" y2="887.50" stroke="#757a75" stroke-width="2.2" /><line x1="2870.16" y1="874.50" x2="2870.16" y2="887.50" stroke="#757a75" stroke-width="2.2" /><line x1="2821.39" y1="921.00" x2="2905.82" y2="921.00" stroke="#757a75" stroke-width="2.2" /><line x1="2821.39" y1="914.50" x2="2821.39" y2="927.50" stroke="#757a75" stroke-width="2.2" /><line x1="2905.82" y1="914.50" x2="2905.82" y2="927.50" stroke="#757a75" stroke-width="2.2" /><path d="M2746.08 282.16 L2957.53 319.84 M2957.97 323.61 L2877.27 358.39 M2867.39 366.39 L2846.70 395.61 M2838.77 406.15 L2815.02 435.85 M2814.96 446.20 L2869.25 515.80 M2870.18 526.81 L2854.93 555.19 M2852.32 567.58 L2854.43 594.42 M2855.04 607.60 L2855.39 634.40 M2856.16 647.56 L2858.98 674.44 M2859.41 687.59 L2858.36 714.41 M2857.49 727.57 L2855.03 754.43 M2853.82 767.57 L2851.36 794.43 M2851.95 807.49 L2856.91 834.51 M2856.12 847.30 L2847.49 874.70 M2845.34 887.60 L2844.64 914.40" fill="none" stroke="#e81010" stroke-width="2.5"/><circle cx="2739.58" cy="281.00" r="6.6" fill="none" stroke="#e81010" stroke-width="2.5"/><circle cx="2964.03" cy="321.00" r="6.6" fill="none" stroke="#e81010" stroke-width="2.5"/><circle cx="2871.21" cy="361.00" r="6.6" fill="none" stroke="#e81010" stroke-width="2.5"/><circle cx="2842.89" cy="401.00" r="6.6" fill="none" stroke="#e81010" stroke-width="2.5"/><circle cx="2810.90" cy="441.00" r="6.6" fill="none" stroke="#e81010" stroke-width="2.5"/><circle cx="2873.31" cy="521.00" r="6.6" fill="none" stroke="#e81010" stroke-width="2.5"/><circle cx="2851.80" cy="561.00" r="6.6" fill="none" stroke="#e81010" stroke-width="2.5"/><circle cx="2854.95" cy="601.00" r="6.6" fill="none" stroke="#e81010" stroke-width="2.5"/><circle cx="2855.48" cy="641.00" r="6.6" fill="none" stroke="#e81010" stroke-width="2.5"/><circle cx="2859.67" cy="681.00" r="6.6" fill="none" stroke="#e81010" stroke-width="2.5"/><circle cx="2858.10" cy="721.00" r="6.6" fill="none" stroke="#e81010" stroke-width="2.5"/><circle cx="2854.43" cy="761.00" r="6.6" fill="none" stroke="#e81010" stroke-width="2.5"/><circle cx="2850.76" cy="801.00" r="6.6" fill="none" stroke="#e81010" stroke-width="2.5"/><circle cx="2858.10" cy="841.00" r="6.6" fill="none" stroke="#e81010" stroke-width="2.5"/><circle cx="2845.51" cy="881.00" r="6.6" fill="none" stroke="#e81010" stroke-width="2.5"/><circle cx="2844.46" cy="921.00" r="6.6" fill="none" stroke="#e81010" stroke-width="2.5"/><path d="M2736.71 275.50 L2747.71 286.50 M2747.71 275.50 L2736.71 286.50" stroke="#1f1fd6" stroke-width="2.6"/><path d="M3602.49 315.50 L3613.49 326.50 M3613.49 315.50 L3602.49 326.50" stroke="#1f1fd6" stroke-width="2.6"/><path d="M3327.70 355.50 L3338.70 366.50 M3338.70 355.50 L3327.70 366.50" stroke="#1f1fd6" stroke-width="2.6"/><path d="M2836.87 555.50 L2847.87 566.50 M2847.87 555.50 L2836.87 566.50" stroke="#1f1fd6" stroke-width="2.6"/><path d="M2842.11 595.50 L2853.11 606.50 M2853.11 595.50 L2842.11 606.50" stroke="#1f1fd6" stroke-width="2.6"/><path d="M2842.63 635.50 L2853.63 646.50 M2853.63 635.50 L2842.63 646.50" stroke="#1f1fd6" stroke-width="2.6"/><path d="M2853.12 715.50 L2864.12 726.50 M2864.12 715.50 L2853.12 726.50" stroke="#1f1fd6" stroke-width="2.6"/><path d="M2832.15 755.50 L2843.15 766.50 M2843.15 755.50 L2832.15 766.50" stroke="#1f1fd6" stroke-width="2.6"/><path d="M2849.45 795.50 L2860.45 806.50 M2860.45 795.50 L2849.45 806.50" stroke="#1f1fd6" stroke-width="2.6"/><path d="M2835.29 875.50 L2846.29 886.50 M2846.29 875.50 L2835.29 886.50" stroke="#1f1fd6" stroke-width="2.6"/><path d="M2856.27 915.50 L2867.27 926.50 M2867.27 915.50 L2856.27 926.50" stroke="#1f1fd6" stroke-width="2.6"/><rect x="2.00" y="941.00" width="3787.00" height="2.00" fill="#000000" /><rect x="2.00" y="943.00" width="3787.00" height="172.00" fill="#d3d3d3" /><text x="199.00" y="967.00" font-family="Liberation Sans" font-size="23" font-weight="400" fill="#0f1f55" text-anchor="end" >244</text><text x="2346.60" y="967.00" font-family="Liberation Sans" font-size="23.2" font-weight="700" fill="#0f1f55" text-anchor="end" >Round Trip (ms)</text><text x="2438.20" y="967.00" font-family="Liberation Sans" font-size="23" font-weight="400" fill="#0f1f55" text-anchor="end" >22,8</text><text x="2528.00" y="967.00" font-family="Liberation Sans" font-size="23" font-weight="400" fill="#0f1f55" text-anchor="end" >18,4</text><text x="2617.50" y="967.00" font-family="Liberation Sans" font-size="23" font-weight="400" fill="#0f1f55" text-anchor="end" >26,1</text><text x="2707.70" y="967.00" font-family="Liberation Sans" font-size="23" font-weight="400" fill="#0f1f55" text-anchor="end" >9,8</text><text x="3772.60" y="967.00" font-family="Liberation Sans" font-size="22.7" font-weight="400" fill="#0f1f55" text-anchor="end" >Focus: 23:57:50 - 0:07:50</text><rect x="2.00" y="1115.00" width="3787.00" height="906.00" fill="#f4f4f4" /><rect x="2.00" y="2021.00" width="3838.00" height="59.00" fill="#efefef" /><circle cx="1876.6" cy="1121.5" r="4.7" fill="#888888"/><circle cx="1895.7" cy="1121.5" r="4.7" fill="#888888"/><circle cx="1914.8" cy="1121.5" r="4.7" fill="#888888"/><text x="62.00" y="1147.20" font-family="Liberation Sans" font-size="21.3" font-weight="400" fill="#444444" text-anchor="start" >google.de (2a00:1450:4001:814::2003) hop 17</text><text x="3697.60" y="1146.80" font-family="Liberation Sans" font-size="21.1" font-weight="400" fill="#333333" text-anchor="end" >10 minutes (23:57:50 - 0:07:50)</text><circle cx="3717" cy="1142" r="11.4" fill="#dcdcdc"/><path d="M3710.5 1139.3 L3717 1145.9 L3723.6 1139.3" fill="none" stroke="#999" stroke-width="2.5"/><rect x="62.60" y="1156.00" width="3666.70" height="49.00" fill="#fdfdfd" /><rect x="62.60" y="1155.00" width="3666.70" height="2.00" fill="#555555" /><rect x="62.60" y="1203.50" width="3666.70" height="2.00" fill="#555555" /><rect x="62.60" y="1155.00" width="2.00" height="50.50" fill="#555555" /><line x1="64.6" y1="1177" x2="3729.3" y2="1177" stroke="#555555" stroke-width="2" stroke-dasharray="8 10"/><text x="1895.00" y="1174.00" font-family="Liberation Sans" font-size="18.2" font-weight="400" fill="#6b1414" text-anchor="middle" >Jitter (ms)</text><text x="54.70" y="1182.00" font-family="Liberation Sans" font-size="22" font-weight="400" fill="#8b1a1a" text-anchor="end" >35</text><rect x="64.60" y="1198.00" width="257.40" height="2.00" fill="#700f0f" /><rect x="320.50" y="1198.00" width="1.50" height="6.00" fill="#700f0f" /><rect x="322.00" y="1200.50" width="110.00" height="3.50" fill="#700f0f" /><rect x="432.00" y="1198.00" width="13.00" height="2.00" fill="#700f0f" /><rect x="432.00" y="1198.00" width="1.50" height="6.00" fill="#700f0f" /><rect x="443.50" y="1198.00" width="1.50" height="6.00" fill="#700f0f" /><rect x="445.00" y="1200.50" width="673.00" height="3.50" fill="#700f0f" /><rect x="1118.00" y="1198.00" width="60.00" height="2.00" fill="#700f0f" /><rect x="1118.00" y="1198.00" width="1.50" height="6.00" fill="#700f0f" /><rect x="1176.50" y="1198.00" width="1.50" height="6.00" fill="#700f0f" /><rect x="1178.00" y="1200.50" width="199.60" height="3.50" fill="#700f0f" /><rect x="1408.40" y="1200.50" width="230.10" height="3.50" fill="#700f0f" /><rect x="1638.50" y="1198.00" width="42.70" height="2.00" fill="#700f0f" /><rect x="1638.50" y="1198.00" width="1.50" height="6.00" fill="#700f0f" /><rect x="1679.70" y="1198.00" width="1.50" height="6.00" fill="#700f0f" /><rect x="1681.20" y="1200.50" width="139.70" height="3.50" fill="#700f0f" /><rect x="1820.90" y="1198.00" width="59.60" height="2.00" fill="#700f0f" /><rect x="1820.90" y="1198.00" width="1.50" height="6.00" fill="#700f0f" /><rect x="1879.00" y="1198.00" width="1.50" height="6.00" fill="#700f0f" /><rect x="1880.50" y="1200.50" width="124.20" height="3.50" fill="#700f0f" /><rect x="2004.70" y="1198.00" width="90.50" height="2.00" fill="#700f0f" /><rect x="2004.70" y="1198.00" width="1.50" height="6.00" fill="#700f0f" /><rect x="2093.70" y="1198.00" width="1.50" height="6.00" fill="#700f0f" /><rect x="2095.20" y="1200.50" width="14.80" height="3.50" fill="#700f0f" /><rect x="2110.00" y="1198.00" width="15.00" height="2.00" fill="#700f0f" /><rect x="2110.00" y="1198.00" width="1.50" height="6.00" fill="#700f0f" /><rect x="2123.50" y="1198.00" width="1.50" height="6.00" fill="#700f0f" /><rect x="2125.00" y="1200.50" width="32.30" height="3.50" fill="#700f0f" /><rect x="2157.30" y="1198.00" width="89.40" height="2.00" fill="#700f0f" /><rect x="2157.30" y="1198.00" width="1.50" height="6.00" fill="#700f0f" /><rect x="2245.20" y="1198.00" width="1.50" height="6.00" fill="#700f0f" /><rect x="2246.70" y="1200.50" width="522.00" height="3.50" fill="#700f0f" /><rect x="2768.70" y="1198.00" width="120.30" height="2.00" fill="#700f0f" /><rect x="2768.70" y="1198.00" width="1.50" height="6.00" fill="#700f0f" /><rect x="2887.50" y="1198.00" width="1.50" height="6.00" fill="#700f0f" /><rect x="2889.00" y="1200.50" width="322.00" height="3.50" fill="#700f0f" /><rect x="3211.00" y="1198.00" width="13.80" height="2.00" fill="#700f0f" /><rect x="3211.00" y="1198.00" width="1.50" height="6.00" fill="#700f0f" /><rect x="3223.30" y="1198.00" width="1.50" height="6.00" fill="#700f0f" /><rect x="3224.80" y="1200.50" width="502.90" height="3.50" fill="#700f0f" /><rect x="64.60" y="1215.00" width="3663.90" height="765.00" fill="#e0efd7" /><rect x="64.60" y="1902.80" width="3663.90" height="1.50" fill="#c8d8bf" /><text x="64.00" y="1923.05" font-family="Liberation Sans" font-size="20.9" font-weight="400" fill="#bfcdb6" text-anchor="start" >5 ms</text><rect x="64.60" y="1826.35" width="3663.90" height="1.50" fill="#c8d8bf" /><text x="64.00" y="1846.60" font-family="Liberation Sans" font-size="20.9" font-weight="400" fill="#bfcdb6" text-anchor="start" >10 ms</text><rect x="64.60" y="1749.90" width="3663.90" height="1.50" fill="#c8d8bf" /><text x="64.00" y="1770.15" font-family="Liberation Sans" font-size="20.9" font-weight="400" fill="#bfcdb6" text-anchor="start" >15 ms</text><rect x="64.60" y="1673.45" width="3663.90" height="1.50" fill="#c8d8bf" /><text x="64.00" y="1693.70" font-family="Liberation Sans" font-size="20.9" font-weight="400" fill="#bfcdb6" text-anchor="start" >20 ms</text><rect x="64.60" y="1597.00" width="3663.90" height="1.50" fill="#c8d8bf" /><text x="64.00" y="1617.25" font-family="Liberation Sans" font-size="20.9" font-weight="400" fill="#bfcdb6" text-anchor="start" >25 ms</text><rect x="64.60" y="1520.55" width="3663.90" height="1.50" fill="#c8d8bf" /><text x="64.00" y="1540.80" font-family="Liberation Sans" font-size="20.9" font-weight="400" fill="#bfcdb6" text-anchor="start" >30 ms</text><rect x="64.60" y="1444.10" width="3663.90" height="1.50" fill="#c8d8bf" /><text x="64.00" y="1464.35" font-family="Liberation Sans" font-size="20.9" font-weight="400" fill="#bfcdb6" text-anchor="start" >35 ms</text><rect x="64.60" y="1367.65" width="3663.90" height="1.50" fill="#c8d8bf" /><text x="64.00" y="1387.90" font-family="Liberation Sans" font-size="20.9" font-weight="400" fill="#bfcdb6" text-anchor="start" >40 ms</text><rect x="64.60" y="1291.20" width="3663.90" height="1.50" fill="#c8d8bf" /><text x="64.00" y="1311.45" font-family="Liberation Sans" font-size="20.9" font-weight="400" fill="#bfcdb6" text-anchor="start" >45 ms</text><text x="54.70" y="1227.00" font-family="Liberation Sans" font-size="22" font-weight="400" fill="#444444" text-anchor="end" >50</text><text x="54.70" y="1973.00" font-family="Liberation Sans" font-size="22" font-weight="400" fill="#444444" text-anchor="end" >0</text><text x="3731.70" y="1231.70" font-family="Liberation Sans" font-size="20.5" font-weight="400" fill="#c0282d" text-anchor="start" >30</text><text x="54.00" y="1597.50" font-family="Liberation Sans" font-size="20.6" font-weight="400" fill="#444444" text-anchor="middle" transform="rotate(-90 54 1597.5)">Latency (ms)</text><text x="3737.50" y="1611.50" font-family="Liberation Sans" font-size="20.3" font-weight="400" fill="#d43a3a" text-anchor="middle" transform="rotate(90 3737.5 1611.5)">Packet Loss %</text><path d="M64.00 1682.70 L79.27 1682.70 L79.27 1682.70 L79.27 1580.90 L94.54 1580.90 L94.54 1580.90 L94.54 1670.80 L109.81 1670.80 L109.81 1670.80 L109.81 1603.00 L125.08 1603.00 L125.08 1603.00 L125.08 1689.00 L140.35 1689.00 L140.35 1689.00 L140.35 1596.80 L155.62 1596.80 L155.62 1596.80 L155.62 1595.00 L170.89 1595.00 L170.89 1595.00 L170.89 1575.00 L186.16 1575.00 L186.16 1575.00 L186.16 1637.00 L201.43 1637.00 L201.43 1637.00 L201.43 1618.60 L216.70 1618.60 L216.70 1618.60 L216.70 1540.90 L231.97 1540.90 L231.97 1540.90 L231.97 1531.20 L247.24 1531.20 L247.24 1531.20 L247.24 1682.70 L262.51 1682.70 L262.51 1682.70 L262.51 1634.80 L277.78 1634.80 L277.78 1634.80 L277.78 1687.50 L293.05 1687.50 L293.05 1687.50 L293.05 1634.80 L308.32 1634.80 L308.32 1634.80 L308.32 1668.30 L323.59 1668.30 L323.59 1668.30 L323.59 1637.30 L338.86 1637.30 L338.86 1637.30 L338.86 1658.40 L354.13 1658.40 L354.13 1658.40 L354.13 1523.00 L369.40 1523.00 L369.40 1523.00 L369.40 1662.90 L384.67 1662.90 L384.67 1662.90 L384.67 1684.50 L399.94 1684.50 L399.94 1684.50 L399.94 1656.60 L415.21 1656.60 L415.21 1656.60 L415.21 1590.80 L430.48 1590.80 L430.48 1590.80 L430.48 1670.30 L445.75 1670.30 L445.75 1670.30 L445.75 1668.30 L461.02 1668.30 L461.02 1668.30 L461.02 1642.20 L476.29 1642.20 L476.29 1642.20 L476.29 1616.90 L491.56 1616.90 L491.56 1616.90 L491.56 1694.40 L506.83 1694.40 L506.83 1694.40 L506.83 1618.60 L522.10 1618.60 L522.10 1618.60 L522.10 1651.00 L537.37 1651.00 L537.37 1651.00 L537.37 1592.50 L552.64 1592.50 L560.27 1592.50 L560.27 1554.80 L583.18 1554.80 L590.81 1554.80 L590.81 1646.70 L613.72 1646.70 L621.36 1646.70 L621.36 1603.00 L644.26 1603.00 L644.26 1603.00 L644.26 1649.00 L659.53 1649.00 L659.53 1649.00 L659.53 1676.50 L674.80 1676.50 L674.80 1676.50 L674.80 1670.70 L690.07 1670.70 L690.07 1670.70 L690.07 1550.20 L705.34 1550.20 L712.98 1550.20 L712.98 1628.90 L735.88 1628.90 L735.88 1628.90 L735.88 1687.30 L751.15 1687.30 L751.15 1687.30 L751.15 1690.60 L766.42 1690.60 L766.42 1690.60 L766.42 1695.00 L781.69 1695.00 L781.69 1695.00 L781.69 1598.60 L796.96 1598.60 L804.60 1598.60 L804.60 1556.40 L827.50 1556.40 L827.50 1556.40 L827.50 1626.70 L842.77 1626.70 L842.77 1626.70 L842.77 1650.80 L858.04 1650.80 L858.04 1650.80 L858.04 1660.70 L873.31 1660.70 L873.31 1660.70 L873.31 1618.50 L888.58 1618.50 L888.58 1618.50 L888.58 1664.50 L903.85 1664.50 L903.85 1664.50 L903.85 1686.80 L919.12 1686.80 L919.12 1686.80 L919.12 1604.30 L934.39 1604.30 L934.39 1604.30 L934.39 1660.70 L949.66 1660.70 L957.29 1660.70 L957.29 1678.90 L980.20 1678.90 L980.20 1678.90 L980.20 1614.30 L995.47 1614.30 L995.47 1614.30 L995.47 1650.30 L1010.74 1650.30 L1010.74 1650.30 L1010.74 1626.70 L1026.01 1626.70 L1026.01 1626.70 L1026.01 1698.80 L1041.28 1698.80 L1041.28 1698.80 L1041.28 1670.70 L1056.55 1670.70 L1064.18 1670.70 L1064.18 1642.90 L1087.09 1642.90 L1087.09 1642.90 L1087.09 1667.00 L1102.36 1667.00 L1102.36 1667.00 L1102.36 1452.50 L1117.63 1452.50 L1117.63 1452.50 L1117.63 1632.90 L1132.90 1632.90 L1132.90 1632.90 L1132.90 1670.70 L1148.17 1670.70 L1148.17 1670.70 L1148.17 1654.00 L1163.44 1654.00 L1163.44 1654.00 L1163.44 1654.00 L1178.71 1654.00 L1178.71 1654.00 L1178.71 1648.30 L1193.98 1648.30 L1193.98 1648.30 L1193.98 1650.30 L1209.25 1650.30 L1209.25 1650.30 L1209.25 1614.30 L1224.52 1614.30 L1224.52 1614.30 L1224.52 1662.70 L1239.79 1662.70 L1239.79 1662.70 L1239.79 1667.00 L1255.06 1667.00 L1255.06 1667.00 L1255.06 1687.30 L1270.33 1687.30 L1270.33 1687.30 L1270.33 1592.90 L1285.60 1592.90 L1285.60 1592.90 L1285.60 1626.70 L1300.87 1626.70 L1300.87 1626.70 L1300.87 1618.50 L1316.14 1618.50 L1316.14 1618.50 L1316.14 1610.30 L1331.41 1610.30 L1331.41 1610.30 L1331.41 1626.70 L1346.68 1626.70 L1346.68 1626.70 L1346.68 1620.20 L1361.95 1620.20 L1361.95 1620.20 L1361.95 1610.30 L1377.22 1610.30 L1377.22 1610.30 L1377.22 1620.20 L1392.49 1620.20 L1392.49 1620.20 L1392.49 1626.70 L1407.76 1626.70 L1407.76 1626.70 L1407.76 1652.80 L1423.03 1652.80 L1430.66 1652.80 L1430.66 1678.90 L1453.57 1678.90 L1453.57 1678.90 L1453.57 1614.30 L1468.84 1614.30 L1468.84 1614.30 L1468.84 1650.30 L1484.11 1650.30 L1484.11 1650.30 L1484.11 1578.80 L1499.38 1578.80 L1499.38 1578.80 L1499.38 1654.00 L1514.65 1654.00 L1514.65 1654.00 L1514.65 1585.00 L1529.92 1585.00 L1529.92 1585.00 L1529.92 1668.20 L1545.19 1668.20 L1545.19 1668.20 L1545.19 1606.60 L1560.46 1606.60 L1560.46 1606.60 L1560.46 1608.60 L1575.73 1608.60 L1575.73 1608.60 L1575.73 1619.00 L1591.00 1619.00 L1591.00 1619.00 L1591.00 1676.90 L1606.27 1676.90 L1606.27 1676.90 L1606.27 1626.70 L1621.54 1626.70 L1621.54 1626.70 L1621.54 1527.10 L1636.81 1527.10 L1636.81 1527.10 L1636.81 1663.20 L1652.08 1663.20 L1652.08 1663.20 L1652.08 1634.70 L1667.35 1634.70 L1667.35 1634.70 L1667.35 1682.60 L1682.62 1682.60 L1682.62 1682.60 L1682.62 1634.70 L1697.89 1634.70 L1697.89 1634.70 L1697.89 1653.30 L1713.16 1653.30 L1713.16 1653.30 L1713.16 1614.00 L1728.43 1614.00 L1736.07 1614.00 L1736.07 1612.80 L1758.97 1612.80 L1758.97 1612.80 L1758.97 1694.30 L1774.24 1694.30 L1781.88 1694.30 L1781.88 1682.60 L1804.78 1682.60 L1804.78 1682.60 L1804.78 1656.50 L1820.05 1656.50 L1820.05 1656.50 L1820.05 1576.80 L1835.32 1576.80 L1835.32 1576.80 L1835.32 1692.50 L1850.59 1692.50 L1858.22 1692.50 L1858.22 1678.10 L1881.13 1678.10 L1888.76 1678.10 L1888.76 1680.10 L1911.67 1680.10 L1911.67 1680.10 L1911.67 1670.20 L1926.94 1670.20 L1934.58 1670.20 L1934.58 1696.80 L1957.48 1696.80 L1957.48 1696.80 L1957.48 1660.20 L1972.75 1660.20 L1980.38 1660.20 L1980.38 1698.00 L2003.29 1698.00 L2003.29 1698.00 L2003.29 1570.00 L2018.56 1570.00 L2018.56 1570.00 L2018.56 1666.50 L2033.83 1666.50 L2033.83 1666.50 L2033.83 1628.40 L2049.10 1628.40 L2049.10 1628.40 L2049.10 1690.60 L2064.37 1690.60 L2072.00 1690.60 L2072.00 1575.00 L2094.91 1575.00 L2094.91 1575.00 L2094.91 1571.80 L2110.18 1571.80 L2110.18 1571.80 L2110.18 1690.60 L2125.45 1690.60 L2125.45 1690.60 L2125.45 1696.80 L2140.72 1696.80 L2140.72 1696.80 L2140.72 1656.50 L2155.99 1656.50 L2155.99 1656.50 L2155.99 1555.70 L2171.26 1555.70 L2171.26 1555.70 L2171.26 1683.10 L2186.53 1683.10 L2194.16 1683.10 L2194.16 1578.80 L2217.07 1578.80 L2217.07 1578.80 L2217.07 1658.30 L2232.34 1658.30 L2232.34 1658.30 L2232.34 1662.70 L2247.61 1662.70 L2247.61 1662.70 L2247.61 1668.20 L2262.88 1668.20 L2262.88 1668.20 L2262.88 1686.80 L2278.15 1686.80 L2278.15 1686.80 L2278.15 1650.30 L2293.42 1650.30 L2301.05 1650.30 L2301.05 1648.80 L2323.96 1648.80 L2323.96 1648.80 L2323.96 1660.20 L2339.23 1660.20 L2339.23 1660.20 L2339.23 1612.80 L2354.50 1612.80 L2354.50 1612.80 L2354.50 1672.70 L2369.77 1672.70 L2377.40 1672.70 L2377.40 1696.80 L2400.31 1696.80 L2400.31 1696.80 L2400.31 1578.80 L2415.58 1578.80 L2415.58 1578.80 L2415.58 1668.20 L2430.85 1668.20 L2430.85 1668.20 L2430.85 1629.20 L2446.12 1629.20 L2446.12 1629.20 L2446.12 1662.70 L2461.39 1662.70 L2461.39 1662.70 L2461.39 1629.20 L2476.66 1629.20 L2476.66 1629.20 L2476.66 1660.20 L2491.93 1660.20 L2491.93 1660.20 L2491.93 1642.10 L2507.20 1642.10 L2507.20 1642.10 L2507.20 1650.00 L2522.47 1650.00 L2522.47 1650.00 L2522.47 1619.70 L2537.74 1619.70 L2537.74 1619.70 L2537.74 1593.70 L2553.01 1593.70 L2553.01 1593.70 L2553.01 1592.40 L2568.28 1592.40 L2568.28 1592.40 L2568.28 1656.50 L2583.55 1656.50 L2583.55 1656.50 L2583.55 1580.00 L2598.82 1580.00 L2598.82 1580.00 L2598.82 1614.30 L2614.09 1614.30 L2614.09 1614.30 L2614.09 1662.70 L2629.36 1662.70 L2629.36 1662.70 L2629.36 1594.90 L2644.63 1594.90 L2644.63 1594.90 L2644.63 1644.10 L2659.90 1644.10 L2659.90 1644.10 L2659.90 1572.00 L2675.17 1572.00 L2675.17 1572.00 L2675.17 1642.90 L2690.44 1642.90 L2690.44 1642.90 L2690.44 1555.70 L2705.71 1555.70 L2705.71 1555.70 L2705.71 1673.20 L2720.98 1673.20 L2720.98 1673.20 L2720.98 1575.80 L2736.25 1575.80 L2743.88 1575.80 L2743.88 1634.70 L2766.79 1634.70 L2774.42 1634.70 L2774.42 1664.00 L2797.33 1664.00 L2797.33 1664.00 L2797.33 1624.20 L2812.60 1624.20 L2820.23 1624.20 L2820.23 1622.70 L2843.14 1622.70 L2850.77 1622.70 L2850.77 1642.90 L2873.68 1642.90 L2873.68 1642.90 L2873.68 1608.60 L2888.95 1608.60 L2888.95 1608.60 L2888.95 1598.60 L2904.22 1598.60 L2904.22 1598.60 L2904.22 1662.70 L2919.49 1662.70 L2919.49 1662.70 L2919.49 1626.70 L2934.76 1626.70 L2934.76 1626.70 L2934.76 1624.20 L2950.03 1624.20 L2950.03 1624.20 L2950.03 1532.80 L2965.30 1532.80 L2965.30 1532.80 L2965.30 1541.00 L2980.57 1541.00 L2980.57 1541.00 L2980.57 1622.70 L2995.84 1622.70 L3003.47 1622.70 L3003.47 1614.30 L3026.38 1614.30 L3026.38 1614.30 L3026.38 1599.90 L3041.65 1599.90 L3041.65 1599.90 L3041.65 1586.20 L3056.92 1586.20 L3064.55 1586.20 L3064.55 1506.20 L3087.46 1506.20 L3087.46 1506.20 L3087.46 1656.50 L3102.73 1656.50 L3102.73 1656.50 L3102.73 1622.70 L3118.00 1622.70 L3118.00 1622.70 L3118.00 1658.30 L3133.27 1658.30 L3133.27 1658.30 L3133.27 1570.00 L3148.54 1570.00 L3148.54 1570.00 L3148.54 1668.20 L3163.81 1668.20 L3163.81 1668.20 L3163.81 1622.70 L3179.08 1622.70 L3179.08 1622.70 L3179.08 1628.40 L3194.35 1628.40 L3194.35 1628.40 L3194.35 1564.60 L3209.62 1564.60 L3209.62 1564.60 L3209.62 1658.30 L3224.89 1658.30 L3224.89 1658.30 L3224.89 1589.90 L3240.16 1589.90 L3240.16 1589.90 L3240.16 1649.00 L3255.43 1649.00 L3255.43 1649.00 L3255.43 1634.70 L3270.70 1634.70 L3270.70 1634.70 L3270.70 1616.00 L3285.97 1616.00 L3285.97 1616.00 L3285.97 1616.00 L3301.24 1616.00 L3301.24 1616.00 L3301.24 1554.70 L3316.51 1554.70 L3316.51 1554.70 L3316.51 1592.90 L3331.78 1592.90 L3331.78 1592.90 L3331.78 1555.70 L3347.05 1555.70 L3347.05 1555.70 L3347.05 1619.00 L3362.32 1619.00 L3362.32 1619.00 L3362.32 1612.80 L3377.59 1612.80 L3377.59 1612.80 L3377.59 1624.70 L3392.86 1624.70 L3392.86 1624.70 L3392.86 1619.70 L3408.13 1619.70 L3408.13 1619.70 L3408.13 1649.00 L3423.40 1649.00 L3423.40 1649.00 L3423.40 1626.70 L3438.67 1626.70 L3438.67 1626.70 L3438.67 1622.70 L3453.94 1622.70 L3453.94 1622.70 L3453.94 1640.40 L3469.21 1640.40 L3469.21 1640.40 L3469.21 1628.40 L3484.48 1628.40 L3484.48 1628.40 L3484.48 1570.00 L3499.75 1570.00 L3499.75 1570.00 L3499.75 1602.90 L3515.02 1602.90 L3515.02 1602.90 L3515.02 1638.40 L3530.29 1638.40 L3530.29 1638.40 L3530.29 1650.00 L3545.56 1650.00 L3545.56 1650.00 L3545.56 1626.70 L3560.83 1626.70 L3560.83 1626.70 L3560.83 1608.60 L3576.10 1608.60 L3576.10 1608.60 L3576.10 1667.00 L3591.37 1667.00 L3591.37 1667.00 L3591.37 1663.20 L3606.64 1663.20 L3606.64 1663.20 L3606.64 1602.90 L3621.91 1602.90 L3621.91 1602.90 L3621.91 1516.10 L3637.18 1516.10 L3637.18 1516.10 L3637.18 1616.00 L3652.45 1616.00 L3652.45 1616.00 L3652.45 1612.80 L3667.72 1612.80 L3667.72 1612.80 L3667.72 1616.00 L3682.99 1616.00 L3682.99 1616.00 L3682.99 1589.90 L3698.26 1589.90 L3698.26 1589.90 L3698.26 1660.20 L3713.53 1660.20 L3713.53 1660.20 L3713.53 1580.00 L3728.80 1580.00" fill="none" stroke="#141814" stroke-width="2" stroke-linejoin="miter"/><path d="M64.00 1682.70 H79.27 M79.27 1580.90 H94.54 M94.54 1670.80 H109.81 M109.81 1603.00 H125.08 M125.08 1689.00 H140.35 M140.35 1596.80 H155.62 M155.62 1595.00 H170.89 M170.89 1575.00 H186.16 M186.16 1637.00 H201.43 M201.43 1618.60 H216.70 M216.70 1540.90 H231.97 M231.97 1531.20 H247.24 M247.24 1682.70 H262.51 M262.51 1634.80 H277.78 M277.78 1687.50 H293.05 M293.05 1634.80 H308.32 M308.32 1668.30 H323.59 M323.59 1637.30 H338.86 M338.86 1658.40 H354.13 M354.13 1523.00 H369.40 M369.40 1662.90 H384.67 M384.67 1684.50 H399.94 M399.94 1656.60 H415.21 M415.21 1590.80 H430.48 M430.48 1670.30 H445.75 M445.75 1668.30 H461.02 M461.02 1642.20 H476.29 M476.29 1616.90 H491.56 M491.56 1694.40 H506.83 M506.83 1618.60 H522.10 M522.10 1651.00 H537.37 M537.37 1592.50 H552.64 M567.91 1554.80 H583.18 M598.45 1646.70 H613.72 M628.99 1603.00 H644.26 M644.26 1649.00 H659.53 M659.53 1676.50 H674.80 M674.80 1670.70 H690.07 M690.07 1550.20 H705.34 M720.61 1628.90 H735.88 M735.88 1687.30 H751.15 M751.15 1690.60 H766.42 M766.42 1695.00 H781.69 M781.69 1598.60 H796.96 M812.23 1556.40 H827.50 M827.50 1626.70 H842.77 M842.77 1650.80 H858.04 M858.04 1660.70 H873.31 M873.31 1618.50 H888.58 M888.58 1664.50 H903.85 M903.85 1686.80 H919.12 M919.12 1604.30 H934.39 M934.39 1660.70 H949.66 M964.93 1678.90 H980.20 M980.20 1614.30 H995.47 M995.47 1650.30 H1010.74 M1010.74 1626.70 H1026.01 M1026.01 1698.80 H1041.28 M1041.28 1670.70 H1056.55 M1071.82 1642.90 H1087.09 M1087.09 1667.00 H1102.36 M1102.36 1452.50 H1117.63 M1117.63 1632.90 H1132.90 M1132.90 1670.70 H1148.17 M1148.17 1654.00 H1163.44 M1163.44 1654.00 H1178.71 M1178.71 1648.30 H1193.98 M1193.98 1650.30 H1209.25 M1209.25 1614.30 H1224.52 M1224.52 1662.70 H1239.79 M1239.79 1667.00 H1255.06 M1255.06 1687.30 H1270.33 M1270.33 1592.90 H1285.60 M1285.60 1626.70 H1300.87 M1300.87 1618.50 H1316.14 M1316.14 1610.30 H1331.41 M1331.41 1626.70 H1346.68 M1346.68 1620.20 H1361.95 M1361.95 1610.30 H1377.22 M1377.22 1620.20 H1392.49 M1392.49 1626.70 H1407.76 M1407.76 1652.80 H1423.03 M1438.30 1678.90 H1453.57 M1453.57 1614.30 H1468.84 M1468.84 1650.30 H1484.11 M1484.11 1578.80 H1499.38 M1499.38 1654.00 H1514.65 M1514.65 1585.00 H1529.92 M1529.92 1668.20 H1545.19 M1545.19 1606.60 H1560.46 M1560.46 1608.60 H1575.73 M1575.73 1619.00 H1591.00 M1591.00 1676.90 H1606.27 M1606.27 1626.70 H1621.54 M1621.54 1527.10 H1636.81 M1636.81 1663.20 H1652.08 M1652.08 1634.70 H1667.35 M1667.35 1682.60 H1682.62 M1682.62 1634.70 H1697.89 M1697.89 1653.30 H1713.16 M1713.16 1614.00 H1728.43 M1743.70 1612.80 H1758.97 M1758.97 1694.30 H1774.24 M1789.51 1682.60 H1804.78 M1804.78 1656.50 H1820.05 M1820.05 1576.80 H1835.32 M1835.32 1692.50 H1850.59 M1865.86 1678.10 H1881.13 M1896.40 1680.10 H1911.67 M1911.67 1670.20 H1926.94 M1942.21 1696.80 H1957.48 M1957.48 1660.20 H1972.75 M1988.02 1698.00 H2003.29 M2003.29 1570.00 H2018.56 M2018.56 1666.50 H2033.83 M2033.83 1628.40 H2049.10 M2049.10 1690.60 H2064.37 M2079.64 1575.00 H2094.91 M2094.91 1571.80 H2110.18 M2110.18 1690.60 H2125.45 M2125.45 1696.80 H2140.72 M2140.72 1656.50 H2155.99 M2155.99 1555.70 H2171.26 M2171.26 1683.10 H2186.53 M2201.80 1578.80 H2217.07 M2217.07 1658.30 H2232.34 M2232.34 1662.70 H2247.61 M2247.61 1668.20 H2262.88 M2262.88 1686.80 H2278.15 M2278.15 1650.30 H2293.42 M2308.69 1648.80 H2323.96 M2323.96 1660.20 H2339.23 M2339.23 1612.80 H2354.50 M2354.50 1672.70 H2369.77 M2385.04 1696.80 H2400.31 M2400.31 1578.80 H2415.58 M2415.58 1668.20 H2430.85 M2430.85 1629.20 H2446.12 M2446.12 1662.70 H2461.39 M2461.39 1629.20 H2476.66 M2476.66 1660.20 H2491.93 M2491.93 1642.10 H2507.20 M2507.20 1650.00 H2522.47 M2522.47 1619.70 H2537.74 M2537.74 1593.70 H2553.01 M2553.01 1592.40 H2568.28 M2568.28 1656.50 H2583.55 M2583.55 1580.00 H2598.82 M2598.82 1614.30 H2614.09 M2614.09 1662.70 H2629.36 M2629.36 1594.90 H2644.63 M2644.63 1644.10 H2659.90 M2659.90 1572.00 H2675.17 M2675.17 1642.90 H2690.44 M2690.44 1555.70 H2705.71 M2705.71 1673.20 H2720.98 M2720.98 1575.80 H2736.25 M2751.52 1634.70 H2766.79 M2782.06 1664.00 H2797.33 M2797.33 1624.20 H2812.60 M2827.87 1622.70 H2843.14 M2858.41 1642.90 H2873.68 M2873.68 1608.60 H2888.95 M2888.95 1598.60 H2904.22 M2904.22 1662.70 H2919.49 M2919.49 1626.70 H2934.76 M2934.76 1624.20 H2950.03 M2950.03 1532.80 H2965.30 M2965.30 1541.00 H2980.57 M2980.57 1622.70 H2995.84 M3011.11 1614.30 H3026.38 M3026.38 1599.90 H3041.65 M3041.65 1586.20 H3056.92 M3072.19 1506.20 H3087.46 M3087.46 1656.50 H3102.73 M3102.73 1622.70 H3118.00 M3118.00 1658.30 H3133.27 M3133.27 1570.00 H3148.54 M3148.54 1668.20 H3163.81 M3163.81 1622.70 H3179.08 M3179.08 1628.40 H3194.35 M3194.35 1564.60 H3209.62 M3209.62 1658.30 H3224.89 M3224.89 1589.90 H3240.16 M3240.16 1649.00 H3255.43 M3255.43 1634.70 H3270.70 M3270.70 1616.00 H3285.97 M3285.97 1616.00 H3301.24 M3301.24 1554.70 H3316.51 M3316.51 1592.90 H3331.78 M3331.78 1555.70 H3347.05 M3347.05 1619.00 H3362.32 M3362.32 1612.80 H3377.59 M3377.59 1624.70 H3392.86 M3392.86 1619.70 H3408.13 M3408.13 1649.00 H3423.40 M3423.40 1626.70 H3438.67 M3438.67 1622.70 H3453.94 M3453.94 1640.40 H3469.21 M3469.21 1628.40 H3484.48 M3484.48 1570.00 H3499.75 M3499.75 1602.90 H3515.02 M3515.02 1638.40 H3530.29 M3530.29 1650.00 H3545.56 M3545.56 1626.70 H3560.83 M3560.83 1608.60 H3576.10 M3576.10 1667.00 H3591.37 M3591.37 1663.20 H3606.64 M3606.64 1602.90 H3621.91 M3621.91 1516.10 H3637.18 M3637.18 1616.00 H3652.45 M3652.45 1612.80 H3667.72 M3667.72 1616.00 H3682.99 M3682.99 1589.90 H3698.26 M3698.26 1660.20 H3713.53 M3713.53 1580.00 H3728.80" fill="none" stroke="#141814" stroke-width="3.4"/><rect x="552.64" y="1215.00" width="15.27" height="765.00" fill="#ff0000" /><rect x="583.18" y="1215.00" width="15.27" height="765.00" fill="#ff0000" /><rect x="613.72" y="1215.00" width="15.27" height="765.00" fill="#ff0000" /><rect x="705.34" y="1215.00" width="15.27" height="765.00" fill="#ff0000" /><rect x="796.96" y="1215.00" width="15.27" height="765.00" fill="#ff0000" /><rect x="949.66" y="1215.00" width="15.27" height="765.00" fill="#ff0000" /><rect x="1056.55" y="1215.00" width="15.27" height="765.00" fill="#ff0000" /><rect x="1423.03" y="1215.00" width="15.27" height="765.00" fill="#ff0000" /><rect x="1728.43" y="1215.00" width="15.27" height="765.00" fill="#ff0000" /><rect x="1774.24" y="1215.00" width="15.27" height="765.00" fill="#ff0000" /><rect x="1850.59" y="1215.00" width="15.27" height="765.00" fill="#ff0000" /><rect x="1881.13" y="1215.00" width="15.27" height="765.00" fill="#ff0000" /><rect x="1926.94" y="1215.00" width="15.27" height="765.00" fill="#ff0000" /><rect x="1972.75" y="1215.00" width="15.27" height="765.00" fill="#ff0000" /><rect x="2064.37" y="1215.00" width="15.27" height="765.00" fill="#ff0000" /><rect x="2186.53" y="1215.00" width="15.27" height="765.00" fill="#ff0000" /><rect x="2293.42" y="1215.00" width="15.27" height="765.00" fill="#ff0000" /><rect x="2369.77" y="1215.00" width="15.27" height="765.00" fill="#ff0000" /><rect x="2736.25" y="1215.00" width="15.27" height="765.00" fill="#ff0000" /><rect x="2766.79" y="1215.00" width="15.27" height="765.00" fill="#ff0000" /><rect x="2812.60" y="1215.00" width="15.27" height="765.00" fill="#ff0000" /><rect x="2843.14" y="1215.00" width="15.27" height="765.00" fill="#ff0000" /><rect x="2995.84" y="1215.00" width="15.27" height="765.00" fill="#ff0000" /><rect x="3056.92" y="1215.00" width="15.27" height="765.00" fill="#ff0000" /><rect x="62.60" y="1214.00" width="2.00" height="768.00" fill="#555555" /><rect x="62.60" y="1980.00" width="3666.40" height="2.00" fill="#555555" /><defs><clipPath id="tclip"><rect x="0" y="1960" width="3728.5" height="60"/></clipPath></defs><g clip-path="url(#tclip)"><rect x="120.70" y="1982.00" width="2.00" height="6.00" fill="#000000" /><text x="96.20" y="2001.50" font-family="Liberation Sans" font-size="20.1" font-weight="400" fill="#2d4d3a" text-anchor="start" >23:58</text><rect x="304.03" y="1982.00" width="2.00" height="6.00" fill="#000000" /><text x="279.53" y="2001.50" font-family="Liberation Sans" font-size="20.1" font-weight="400" fill="#2d4d3a" text-anchor="start" >23:58:30</text><rect x="487.36" y="1982.00" width="2.00" height="6.00" fill="#000000" /><text x="462.86" y="2001.50" font-family="Liberation Sans" font-size="20.1" font-weight="400" fill="#2d4d3a" text-anchor="start" >23:59</text><rect x="670.69" y="1982.00" width="2.00" height="6.00" fill="#000000" /><text x="646.19" y="2001.50" font-family="Liberation Sans" font-size="20.1" font-weight="400" fill="#2d4d3a" text-anchor="start" >23:59:30</text><rect x="854.02" y="1982.00" width="2.00" height="6.00" fill="#000000" /><text x="841.02" y="2001.50" font-family="Liberation Sans" font-size="20.1" font-weight="400" fill="#2d4d3a" text-anchor="start" >0:00</text><rect x="945.69" y="1982.00" width="2.00" height="6.00" fill="#000000" /><text x="932.69" y="2001.50" font-family="Liberation Sans" font-size="20.1" font-weight="400" fill="#2d4d3a" text-anchor="start" >0:00:15</text><rect x="1037.35" y="1982.00" width="2.00" height="6.00" fill="#000000" /><text x="1024.35" y="2001.50" font-family="Liberation Sans" font-size="20.1" font-weight="400" fill="#2d4d3a" text-anchor="start" >0:00:30</text><rect x="1129.01" y="1982.00" width="2.00" height="6.00" fill="#000000" /><text x="1116.01" y="2001.50" font-family="Liberation Sans" font-size="20.1" font-weight="400" fill="#2d4d3a" text-anchor="start" >0:00:45</text><rect x="1220.68" y="1982.00" width="2.00" height="6.00" fill="#000000" /><text x="1207.68" y="2001.50" font-family="Liberation Sans" font-size="20.1" font-weight="400" fill="#2d4d3a" text-anchor="start" >0:01</text><rect x="1312.35" y="1982.00" width="2.00" height="6.00" fill="#000000" /><text x="1299.35" y="2001.50" font-family="Liberation Sans" font-size="20.1" font-weight="400" fill="#2d4d3a" text-anchor="start" >0:01:15</text><rect x="1404.01" y="1982.00" width="2.00" height="6.00" fill="#000000" /><text x="1391.01" y="2001.50" font-family="Liberation Sans" font-size="20.1" font-weight="400" fill="#2d4d3a" text-anchor="start" >0:01:30</text><rect x="1495.67" y="1982.00" width="2.00" height="6.00" fill="#000000" /><text x="1482.67" y="2001.50" font-family="Liberation Sans" font-size="20.1" font-weight="400" fill="#2d4d3a" text-anchor="start" >0:01:45</text><rect x="1587.34" y="1982.00" width="2.00" height="6.00" fill="#000000" /><text x="1574.34" y="2001.50" font-family="Liberation Sans" font-size="20.1" font-weight="400" fill="#2d4d3a" text-anchor="start" >0:02</text><rect x="1679.00" y="1982.00" width="2.00" height="6.00" fill="#000000" /><text x="1666.00" y="2001.50" font-family="Liberation Sans" font-size="20.1" font-weight="400" fill="#2d4d3a" text-anchor="start" >0:02:15</text><rect x="1770.67" y="1982.00" width="2.00" height="6.00" fill="#000000" /><text x="1757.67" y="2001.50" font-family="Liberation Sans" font-size="20.1" font-weight="400" fill="#2d4d3a" text-anchor="start" >0:02:30</text><rect x="1862.34" y="1982.00" width="2.00" height="6.00" fill="#000000" /><text x="1849.34" y="2001.50" font-family="Liberation Sans" font-size="20.1" font-weight="400" fill="#2d4d3a" text-anchor="start" >0:02:45</text><rect x="1954.00" y="1982.00" width="2.00" height="6.00" fill="#000000" /><text x="1941.00" y="2001.50" font-family="Liberation Sans" font-size="20.1" font-weight="400" fill="#2d4d3a" text-anchor="start" >0:03</text><rect x="2045.66" y="1982.00" width="2.00" height="6.00" fill="#000000" /><text x="2032.66" y="2001.50" font-family="Liberation Sans" font-size="20.1" font-weight="400" fill="#2d4d3a" text-anchor="start" >0:03:15</text><rect x="2137.33" y="1982.00" width="2.00" height="6.00" fill="#000000" /><text x="2124.33" y="2001.50" font-family="Liberation Sans" font-size="20.1" font-weight="400" fill="#2d4d3a" text-anchor="start" >0:03:30</text><rect x="2228.99" y="1982.00" width="2.00" height="6.00" fill="#000000" /><text x="2215.99" y="2001.50" font-family="Liberation Sans" font-size="20.1" font-weight="400" fill="#2d4d3a" text-anchor="start" >0:03:45</text><rect x="2320.66" y="1982.00" width="2.00" height="6.00" fill="#000000" /><text x="2307.66" y="2001.50" font-family="Liberation Sans" font-size="20.1" font-weight="400" fill="#2d4d3a" text-anchor="start" >0:04</text><rect x="2412.32" y="1982.00" width="2.00" height="6.00" fill="#000000" /><text x="2399.32" y="2001.50" font-family="Liberation Sans" font-size="20.1" font-weight="400" fill="#2d4d3a" text-anchor="start" >0:04:15</text><rect x="2503.99" y="1982.00" width="2.00" height="6.00" fill="#000000" /><text x="2490.99" y="2001.50" font-family="Liberation Sans" font-size="20.1" font-weight="400" fill="#2d4d3a" text-anchor="start" >0:04:30</text><rect x="2595.65" y="1982.00" width="2.00" height="6.00" fill="#000000" /><text x="2582.65" y="2001.50" font-family="Liberation Sans" font-size="20.1" font-weight="400" fill="#2d4d3a" text-anchor="start" >0:04:45</text><rect x="2687.32" y="1982.00" width="2.00" height="6.00" fill="#000000" /><text x="2674.32" y="2001.50" font-family="Liberation Sans" font-size="20.1" font-weight="400" fill="#2d4d3a" text-anchor="start" >0:05</text><rect x="2778.98" y="1982.00" width="2.00" height="6.00" fill="#000000" /><text x="2765.98" y="2001.50" font-family="Liberation Sans" font-size="20.1" font-weight="400" fill="#2d4d3a" text-anchor="start" >0:05:15</text><rect x="2870.65" y="1982.00" width="2.00" height="6.00" fill="#000000" /><text x="2857.65" y="2001.50" font-family="Liberation Sans" font-size="20.1" font-weight="400" fill="#2d4d3a" text-anchor="start" >0:05:30</text><rect x="2962.31" y="1982.00" width="2.00" height="6.00" fill="#000000" /><text x="2949.31" y="2001.50" font-family="Liberation Sans" font-size="20.1" font-weight="400" fill="#2d4d3a" text-anchor="start" >0:05:45</text><rect x="3053.98" y="1982.00" width="2.00" height="6.00" fill="#000000" /><text x="3040.98" y="2001.50" font-family="Liberation Sans" font-size="20.1" font-weight="400" fill="#2d4d3a" text-anchor="start" >0:06</text><rect x="3145.64" y="1982.00" width="2.00" height="6.00" fill="#000000" /><text x="3132.64" y="2001.50" font-family="Liberation Sans" font-size="20.1" font-weight="400" fill="#2d4d3a" text-anchor="start" >0:06:15</text><rect x="3237.31" y="1982.00" width="2.00" height="6.00" fill="#000000" /><text x="3224.31" y="2001.50" font-family="Liberation Sans" font-size="20.1" font-weight="400" fill="#2d4d3a" text-anchor="start" >0:06:30</text><rect x="3328.97" y="1982.00" width="2.00" height="6.00" fill="#000000" /><text x="3315.97" y="2001.50" font-family="Liberation Sans" font-size="20.1" font-weight="400" fill="#2d4d3a" text-anchor="start" >0:06:45</text><rect x="3420.64" y="1982.00" width="2.00" height="6.00" fill="#000000" /><text x="3407.64" y="2001.50" font-family="Liberation Sans" font-size="20.1" font-weight="400" fill="#2d4d3a" text-anchor="start" >0:07</text><rect x="3512.30" y="1982.00" width="2.00" height="6.00" fill="#000000" /><text x="3499.30" y="2001.50" font-family="Liberation Sans" font-size="20.1" font-weight="400" fill="#2d4d3a" text-anchor="start" >0:07:15</text><rect x="3603.97" y="1982.00" width="2.00" height="6.00" fill="#000000" /><text x="3590.97" y="2001.50" font-family="Liberation Sans" font-size="20.1" font-weight="400" fill="#2d4d3a" text-anchor="start" >0:07:30</text><rect x="3695.63" y="1982.00" width="2.00" height="6.00" fill="#000000" /><text x="3682.63" y="2001.50" font-family="Liberation Sans" font-size="20.1" font-weight="400" fill="#2d4d3a" text-anchor="start" >0:07:45</text></g><polygon points="2734.5,1983.2 2754,2011.8 2715,2011.8" fill="#ff0000"/><rect x="72.00" y="2046.10" width="3640.00" height="7.80" fill="#d5d5d5" /><rect x="74.00" y="2048.00" width="3636.00" height="3.70" fill="#a9a9a9" /><circle cx="3711.2" cy="2049.9" r="17.7" fill="#f4f4f4" stroke="#9a9a9a" stroke-width="1.1"/><rect x="0.00" y="2077.80" width="3838.00" height="2.20" fill="#d9d9d9" /><defs><linearGradient id="tbg" x1="0" x2="1" y1="0" y2="0"><stop offset="0" stop-color="#1f3540"/><stop offset="0.455" stop-color="#22353f"/><stop offset="0.472" stop-color="#454545"/><stop offset="0.935" stop-color="#444444"/><stop offset="0.962" stop-color="#1e2b4a"/><stop offset="1" stop-color="#1a2545"/></linearGradient></defs><rect x="0.00" y="2080.00" width="3840.00" height="80.00" fill="url(#tbg)" /><rect x="492.20" y="2080.00" width="96.00" height="80.00" fill="#4b5a63" /><rect x="304.00" y="2156.00" width="62.40" height="4.00" fill="#76b9ed" /><rect x="367.40" y="2156.00" width="16.40" height="4.00" fill="#5a8cb8" /><rect x="401.90" y="2156.00" width="80.40" height="4.00" fill="#76b9ed" /><rect x="492.20" y="2156.00" width="96.00" height="4.00" fill="#76b9ed" /><g fill="#ffffff"><path d="M31.8 2108.4 L46 2106.4 V2119.3 H31.8 Z"/><path d="M47.6 2106.2 L64 2103.6 V2119.3 H47.6 Z"/><path d="M31.8 2121 H46 V2133.9 L31.8 2131.9 Z"/><path d="M47.6 2121 H64 V2136.5 L47.6 2134.2 Z"/></g><g stroke="#ffffff" stroke-width="2.1" fill="none"><path d="M128.9 2105 V2110 H149.1 V2105"/><rect x="128.9" y="2114.1" width="20.2" height="12.9"/><path d="M128.9 2135 V2130.1 H149.1 V2135"/><path d="M157 2105 V2110.6 M157 2121.4 V2135"/></g><circle cx="157" cy="2115.9" r="3.1" fill="#fff"/><defs><linearGradient id="fold" x1="0" x2="0" y1="0" y2="1"><stop offset="0" stop-color="#ffe07a"/><stop offset="1" stop-color="#f9c834"/></linearGradient><linearGradient id="ffox" x1="0" x2="0.3" y1="0" y2="1"><stop offset="0" stop-color="#ffb125"/><stop offset="0.55" stop-color="#ff5d2b"/><stop offset="1" stop-color="#e8236a"/></linearGradient><linearGradient id="fglobe" x1="0" x2="0" y1="0" y2="1"><stop offset="0" stop-color="#b447f5"/><stop offset="1" stop-color="#5a3fd6"/></linearGradient></defs><g><path d="M226.5 2102.2 H240 Q243 2102.2 245 2104.6 L246 2105.5 H265.5 Q267.2 2105.5 267.2 2107.3 V2134.5 Q267.2 2136.5 265.3 2136.5 H226.5 Q224.6 2136.5 224.6 2134.5 V2104.2 Q224.6 2102.2 226.5 2102.2 Z" fill="url(#fold)"/><path d="M226.5 2102.2 H240 Q243 2102.2 245 2104.6 L247 2107 Q245 2109 242 2109 H224.6 V2104.2 Q224.6 2102.2 226.5 2102.2 Z" fill="#e3a600"/><path d="M234 2120 H258 Q260 2120 260 2122 V2137 H252.6 V2126.7 H239.3 V2137 H232 V2122 Q232 2120 234 2120 Z" fill="#3d97e0"/></g><g><circle cx="344" cy="2122.5" r="19.2" fill="url(#ffox)"/><path d="M350 2097 Q366 2108 365 2124 Q358 2106 344 2104 Q349 2102 350 2097 Z" fill="#ffd43b"/><path d="M325 2114 Q327 2106 331 2104.5 Q331 2110 335 2110 Q338 2103 346 2103 Q337 2108 336 2114 Z" fill="#ff9a1f"/><ellipse cx="343.6" cy="2119.5" rx="8.4" ry="9.6" fill="url(#fglobe)"/><path d="M331 2114 Q339 2110 349 2114 Q342 2116 339 2120 Q336 2117 331 2114 Z" fill="#ff8a1f"/></g><g><rect x="422.9" y="2100.7" width="37.8" height="36.1" rx="5" fill="#7289da"/><path d="M429 2113 Q433 2107 438 2107.5 L440 2109 H444 L446 2107.5 Q451 2107 455 2113 Q457 2121 455 2127 Q451 2129 448 2129 L446 2126.5 Q442 2127.5 438 2126.5 L436 2129 Q432 2129 428.5 2127 Q427 2121 429 2113 Z" fill="#f2f2f6"/><circle cx="437.5" cy="2120" r="2.6" fill="#7289da"/><circle cx="446.5" cy="2120" r="2.6" fill="#7289da"/><circle cx="454.3" cy="2131.6" r="14" fill="#e84e4e"/><circle cx="454.3" cy="2131.6" r="6.4" fill="#ffffff"/></g><g transform="translate(517.2,2096.6) scale(1.4375)"><polygon points="3,0 29,0 32,3 32,29 29,32 3,32 0,29 0,3" fill="#0d8ae6"/><polygon points="0,7.7 11.9,7.7 11.3,10.2 0,10.2" fill="#e8411f"/><polygon points="0,11.2 10.6,11.2 9.9,13.9 0,13.9" fill="#f2c21c"/><polygon points="0,14.5 9.3,14.5 8.4,17.6 0,17.6" fill="#6cc12a"/><path d="M5.1 32 L10.7 32 L14.5 24.6 Q21.5 26 24.7 21.3 Q19 22.6 15.5 20.5 L12 18.2 Z" fill="#ffffff"/><circle cx="20.5" cy="12.4" r="7.7" fill="#0d8ae6"/><circle cx="20.5" cy="12.4" r="6.3" fill="#ffffff"/></g><path d="M3341.2 2126.2 L3354.1 2113.7 L3366.6 2126.2" fill="none" stroke="#ffffff" stroke-width="2"/><rect x="3394.1" y="2103.8" width="14" height="24.6" rx="4" fill="#ffffff"/><g fill="none" stroke="#ffffff" stroke-width="2"><path d="M3391 2120 V2123 Q3391 2132 3401.1 2132 Q3411.1 2132 3411.1 2123 V2120 M3401.1 2132 V2135 M3396 2135.1 H3406"/></g><g fill="none" stroke="#ffffff" stroke-width="2"><rect x="3444.5" y="2108.9" width="20.7" height="18.5"/><rect x="3435" y="2108.9" width="8.8" height="10.6"/><path d="M3437.5 2111.5 H3441.5 M3439 2119.5 V2134 M3439 2127.4 H3445 M3451 2127.4 V2133 M3444.3 2133 H3458.1"/></g><g fill="none" stroke="#ffffff" stroke-width="2"><path d="M3482.2 2114.1 H3487.1 L3493.8 2108.3 V2132 L3487.1 2125.7 H3482.2 Z"/><path d="M3498.5 2115 Q3502 2120 3498.5 2125"/></g><g fill="none" stroke="#8a8a8a" stroke-width="2"><path d="M3503 2111 Q3509.5 2120 3503 2129"/><path d="M3507.5 2106.5 Q3516.5 2120 3507.5 2133.5"/></g><text x="3536.70" y="2129.70" font-family="Liberation Sans" font-size="20" font-weight="400" fill="#ffffff" text-anchor="start" >DEU</text><text x="3664.60" y="2109.70" font-family="Liberation Sans" font-size="22" font-weight="400" fill="#ffffff" text-anchor="middle" >00:07</text><text x="3664.60" y="2147.00" font-family="Liberation Sans" font-size="22" font-weight="400" fill="#ffffff" text-anchor="middle" >10.05.2020</text><path d="M3758.8 2105.7 H3789.1 V2129.5 H3780 L3774 2135 L3768 2129.5 H3758.8 Z" fill="none" stroke="#ffffff" stroke-width="2"/><rect x="3831.00" y="2080.00" width="2.00" height="80.00" fill="#4a5570" /></svg></body></html>
